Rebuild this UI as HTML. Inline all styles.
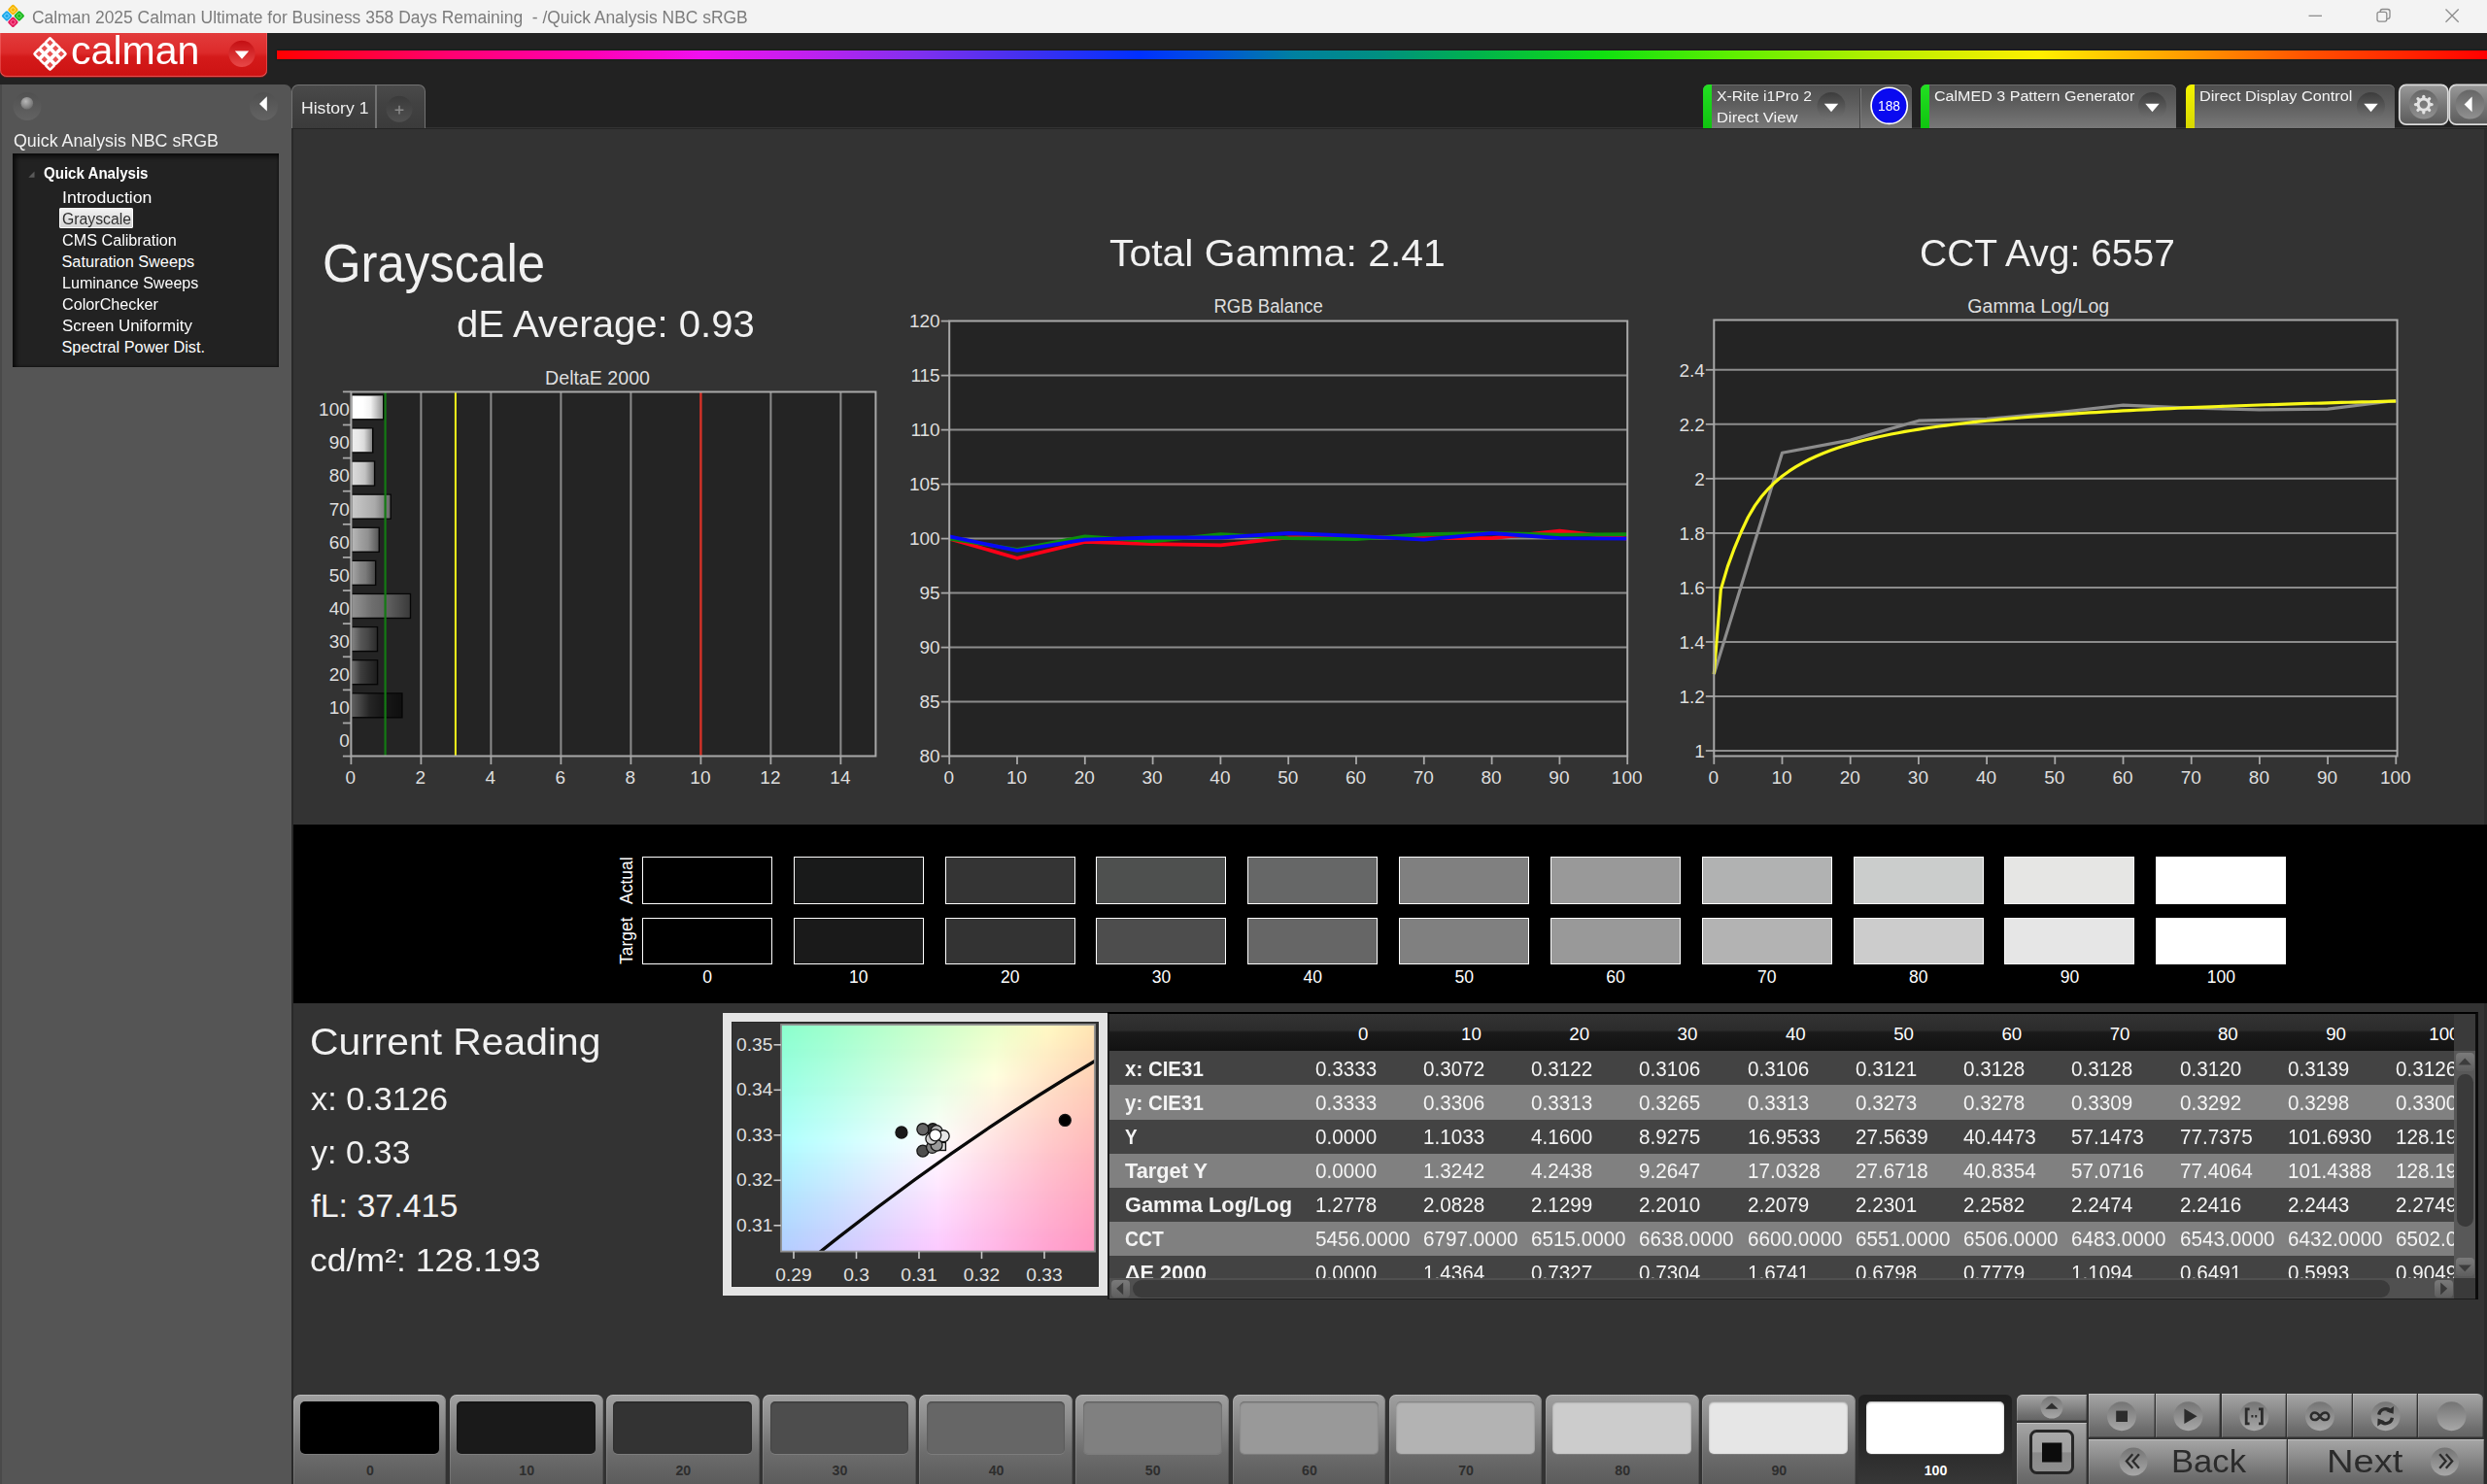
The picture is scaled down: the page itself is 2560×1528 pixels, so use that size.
<!DOCTYPE html>
<html lang="en"><head><meta charset="utf-8"><title>Calman 2025 - Quick Analysis NBC sRGB</title>
<style>
html,body{margin:0;padding:0;background:#333;}
body{width:2560px;height:1528px;overflow:hidden;font-family:"Liberation Sans",sans-serif;}
#app{position:relative;width:2560px;height:1528px;overflow:hidden;background:#333333;}
.b{position:absolute;box-sizing:border-box;}
.t{position:absolute;white-space:pre;line-height:1;transform-origin:0 0;font-family:"Liberation Sans",sans-serif;}
svg{position:absolute;left:0;top:0;overflow:visible;}
svg text{font-family:"Liberation Sans",sans-serif;}
</style></head><body><div id="app">
<div class="b" style="left:0px;top:0px;width:2560px;height:34px;background:#f3f3f3;"></div>
<svg width="34" height="34" viewBox="0 0 34 34">
<g transform="translate(13.4 16.4) rotate(45)">
<rect x="-8.6" y="-8.6" width="8.2" height="8.2" rx="1.6" fill="#f5b400"/>
<rect x="-8.6" y="0.4" width="8.2" height="8.2" rx="1.6" fill="#1aa7e8"/>
<rect x="0.4" y="-8.6" width="8.2" height="8.2" rx="1.6" fill="#19b41c"/>
<rect x="0.4" y="0.4" width="8.2" height="8.2" rx="1.6" fill="#e0185a"/>
<rect x="-6.5" y="-6.5" width="4" height="4" rx="0.8" fill="none" stroke="#ffd95a" stroke-width="1"/>
<rect x="-6.5" y="2.5" width="4" height="4" rx="0.8" fill="none" stroke="#6cd0ff" stroke-width="1"/>
<rect x="2.5" y="-6.5" width="4" height="4" rx="0.8" fill="none" stroke="#5fe060" stroke-width="1"/>
<rect x="2.5" y="2.5" width="4" height="4" rx="0.8" fill="none" stroke="#ff6a9a" stroke-width="1"/>
</g></svg>
<span class="t" style="left:33px;top:9.7px;font-size:17.6px;color:#7c7c7c;transform:scaleX(0.9914);">Calman 2025 Calman Ultimate for Business 358 Days Remaining  - /Quick Analysis NBC sRGB</span>
<svg width="2560" height="34" viewBox="0 0 2560 34" fill="none" stroke="#8c8c8c" stroke-width="1.3">
<path d="M2376.5 16.3H2390"/>
<rect x="2447" y="12.3" width="9.8" height="9.8" rx="2"/>
<path d="M2450.2 12.3v-0.6a2.2 2.2 0 0 1 2.2-2.2h5.4a2.2 2.2 0 0 1 2.2 2.2v5.4a2.2 2.2 0 0 1-2.2 2.2h-0.8"/>
<path d="M2517.5 9.5l13.2 13.2M2530.7 9.5l-13.2 13.2"/>
</svg>
<div class="b" style="left:0px;top:34px;width:2560px;height:97px;background:#222222;"></div>
<div class="b" style="left:285px;top:52px;width:2275px;height:9px;background:linear-gradient(90deg,#ff0000 0%,#ff0070 7.8%,#ff00b0 13.9%,#f010f0 19.3%,#c020f0 24%,#8030f0 29%,#4030f0 34%,#0030ff 39%,#0050e0 42%,#0080a0 46%,#009080 50%,#00b050 54%,#10e010 60%,#60f000 66%,#b0f000 72%,#fff000 79.7%,#ffa000 86%,#ff5000 92%,#ff0000 100%);box-shadow:0 0 2px rgba(0,0,0,.6);"></div>
<div class="b" style="left:0px;top:34px;width:274.5px;height:44.5px;background:linear-gradient(180deg,#e23c3c 0%,#dd2a2a 45%,#d41a1a 55%,#cc1212 100%);border-radius:0 0 7px 7px;box-shadow:0 1px 0 #7a1a1a, inset 0 -1px 0 rgba(255,150,150,.45), inset 1px 0 0 rgba(255,140,140,.35), inset -1px 0 0 rgba(255,140,140,.35);"></div>
<svg width="280" height="90" viewBox="0 0 280 90">
<g transform="translate(51.5 55.5) rotate(45)" fill="#e85252" stroke="#fff" stroke-width="2.5">
<rect x="-11.6" y="-11.6" width="7" height="7" rx="1"/><rect x="-3.5" y="-11.6" width="7" height="7" rx="1"/><rect x="4.6" y="-11.6" width="7" height="7" rx="1"/>
<rect x="-11.6" y="-3.5" width="7" height="7" rx="1"/><rect x="-3.5" y="-3.5" width="7" height="7" rx="1"/><rect x="4.6" y="-3.5" width="7" height="7" rx="1"/>
<rect x="-11.6" y="4.6" width="7" height="7" rx="1"/><rect x="-3.5" y="4.6" width="7" height="7" rx="1"/><rect x="4.6" y="4.6" width="7" height="7" rx="1"/>
</g>
<defs><linearGradient id="lgdd" x1="0" y1="0" x2="0" y2="1"><stop offset="0" stop-color="#c40e12"/><stop offset="1" stop-color="#e84848"/></linearGradient></defs>
<circle cx="249" cy="55.3" r="13.6" fill="url(#lgdd)"/>
<path d="M241.8 52.4h14.4l-7.2 8.4z" fill="#fff"/>
</svg>
<span class="t" style="left:72.6px;top:32.3px;font-size:40.4px;color:#ffffff;transform:scaleX(1.0174);">calman</span>
<div class="b" style="left:0px;top:87px;width:299.5px;height:1441px;background:#555555;border-radius:0 7px 0 0;border-left:2px solid #4a4a4a;"></div>
<svg width="300" height="140" viewBox="0 0 300 140">
<defs>
<linearGradient id="sbc" x1="0" y1="0" x2="0" y2="1"><stop offset="0" stop-color="#505050"/><stop offset="1" stop-color="#636363"/></linearGradient>
<radialGradient id="sph" cx="0.4" cy="0.35" r="0.7"><stop offset="0" stop-color="#b8b8b8"/><stop offset="1" stop-color="#6a6a6a"/></radialGradient>
</defs>
<circle cx="28" cy="109.5" r="14.5" fill="url(#sbc)"/>
<circle cx="27.8" cy="106.3" r="6.3" fill="url(#sph)"/>
<circle cx="271.5" cy="109.5" r="14.5" fill="url(#sbc)"/>
<path d="M274.8 99.2v15.4l-7.8-7.7z" fill="#fff"/>
</svg>
<span class="t" style="left:14.2px;top:136.6px;font-size:17.6px;color:#f2f2f2;transform:scaleX(1.0129);">Quick Analysis NBC sRGB</span>
<div class="b" style="left:13px;top:158px;width:273.5px;height:220px;background:#222222;box-shadow:inset 3px 3px 5px rgba(0,0,0,.75), inset -1px -1px 2px rgba(0,0,0,.4);"></div>
<svg width="80" height="200" viewBox="0 0 80 200"><path d="M35.5 176.6v6.2h-6.2z" fill="#5a5a5a"/></svg>
<span class="t" style="left:45px;top:171.26px;font-size:16px;color:#ffffff;font-weight:bold;transform:scaleX(0.9419);">Quick Analysis</span>
<div class="b" style="left:61.3px;top:213.5px;width:76px;height:21.5px;background:linear-gradient(180deg,#f2f2f2,#d4d4d4);border:1px solid #fafafa;border-radius:1px;"></div>
<span class="t" style="left:63.5px;top:195px;font-size:16.3px;color:#ffffff;transform:scaleX(1.0860);">Introduction</span>
<span class="t" style="left:63.5px;top:217.05px;font-size:16.3px;color:#2e2e2e;transform:scaleX(0.9676);">Grayscale</span>
<span class="t" style="left:63.5px;top:239.1px;font-size:16.3px;color:#ffffff;transform:scaleX(0.9944);">CMS Calibration</span>
<span class="t" style="left:63.5px;top:261.15px;font-size:16.3px;color:#ffffff;">Saturation Sweeps</span>
<span class="t" style="left:63.5px;top:283.2px;font-size:16.3px;color:#ffffff;transform:scaleX(0.9876);">Luminance Sweeps</span>
<span class="t" style="left:63.5px;top:305.25px;font-size:16.3px;color:#ffffff;transform:scaleX(0.9935);">ColorChecker</span>
<span class="t" style="left:63.5px;top:327.3px;font-size:16.3px;color:#ffffff;transform:scaleX(1.0345);">Screen Uniformity</span>
<span class="t" style="left:63.5px;top:349.35px;font-size:16.3px;color:#ffffff;">Spectral Power Dist.</span>
<div class="b" style="left:300px;top:86.6px;width:137.5px;height:45px;background:linear-gradient(180deg,#4a4a4a 0%,#424242 40%,#3b3b3b 100%);border:1.5px solid #727272;border-bottom:none;border-radius:7px 7px 0 0;"></div>
<div class="b" style="left:386.4px;top:88px;width:2px;height:43.5px;background:#727272;"></div>
<svg width="450" height="140" viewBox="0 0 450 140">
<defs><linearGradient id="plc" x1="0" y1="0" x2="0" y2="1"><stop offset="0" stop-color="#3a3a3a"/><stop offset="1" stop-color="#505050"/></linearGradient></defs>
<circle cx="411" cy="112.3" r="13.5" fill="url(#plc)"/>
<path d="M406.6 113.2h8.8M411 108.8v8.8" stroke="#8a8a8a" stroke-width="1.5" fill="none"/>
</svg>
<span class="t" style="left:309.6px;top:102.96px;font-size:17.3px;color:#f0f0f0;transform:scaleX(1.0183);">History 1</span>
<div class="b" style="left:1753px;top:87px;width:215px;height:44.5px;background:linear-gradient(180deg,#4e4e4e 0%,#5e5e5e 45%,#787878 100%);border-radius:6px 6px 0 0;overflow:hidden;box-shadow:inset 0 1px 0 #6c6c6c;"><div class="b" style="left:0;top:0;width:9px;height:45px;background:linear-gradient(180deg,#22e022,#10c410);"></div></div>
<div class="b" style="left:1976.5px;top:87px;width:263.5px;height:44.5px;background:linear-gradient(180deg,#4e4e4e 0%,#5e5e5e 45%,#787878 100%);border-radius:6px 6px 0 0;overflow:hidden;box-shadow:inset 0 1px 0 #6c6c6c;"><div class="b" style="left:0;top:0;width:9px;height:45px;background:linear-gradient(180deg,#22e022,#10c410);"></div></div>
<div class="b" style="left:2250px;top:87px;width:214.5px;height:44.5px;background:linear-gradient(180deg,#4e4e4e 0%,#5e5e5e 45%,#787878 100%);border-radius:6px 6px 0 0;overflow:hidden;box-shadow:inset 0 1px 0 #6c6c6c;"><div class="b" style="left:0;top:0;width:9px;height:45px;background:linear-gradient(180deg,#f4f400,#d8d800);"></div></div>
<div class="b" style="left:1913.6px;top:91px;width:1.6px;height:40.5px;background:#454545;box-shadow:1px 0 0 #7a7a7a;"></div>
<svg width="2560" height="140" viewBox="0 0 2560 140">
<defs><linearGradient id="ddc" x1="0" y1="0" x2="0" y2="1"><stop offset="0" stop-color="#3c3c3c"/><stop offset="1" stop-color="#727272"/></linearGradient>
<linearGradient id="gbt" x1="0" y1="0" x2="0" y2="1"><stop offset="0" stop-color="#9a9a9a"/><stop offset="0.5" stop-color="#787878"/><stop offset="1" stop-color="#5a5a5a"/></linearGradient>
<linearGradient id="gci" x1="0" y1="0" x2="0" y2="1"><stop offset="0" stop-color="#666666"/><stop offset="1" stop-color="#909090"/></linearGradient></defs>
<circle cx="1885" cy="109.5" r="14.5" fill="url(#ddc)"/><path d="M1877.8 106.8h14.4l-7.2 8.4z" fill="#fff"/>
<circle cx="2215.5" cy="109.5" r="14.5" fill="url(#ddc)"/><path d="M2208.3 106.8h14.4l-7.2 8.4z" fill="#fff"/>
<circle cx="2440.5" cy="109.5" r="14.5" fill="url(#ddc)"/><path d="M2433.3 106.8h14.4l-7.2 8.4z" fill="#fff"/>
<circle cx="1944.7" cy="108.8" r="18.6" fill="#0a0af0" stroke="#fff" stroke-width="1.6"/>
<rect x="2469.8" y="87.4" width="50" height="40.8" rx="7" fill="url(#gbt)" stroke="#dadada" stroke-width="1.7"/>
<rect x="2521.3" y="87.4" width="50" height="40.8" rx="7" fill="url(#gbt)" stroke="#dadada" stroke-width="1.7"/>
<circle cx="2494.8" cy="107.6" r="15" fill="url(#gci)"/>
<circle cx="2542.5" cy="107.6" r="15" fill="url(#gci)"/>
<path d="M2544.6 99.6v15.6l-8-7.8z" fill="#fff"/>
<g transform="translate(2494.8 107.6)" fill="none" stroke="#e2e2e2">
<circle r="5.7" stroke-width="3"/>
<g stroke-width="3.2" stroke-linecap="round"><path d="M0 -7.2V-8.3"/><path d="M0 -7.2V-8.3" transform="rotate(45)"/><path d="M0 -7.2V-8.3" transform="rotate(90)"/><path d="M0 -7.2V-8.3" transform="rotate(135)"/><path d="M0 -7.2V-8.3" transform="rotate(180)"/><path d="M0 -7.2V-8.3" transform="rotate(225)"/><path d="M0 -7.2V-8.3" transform="rotate(270)"/><path d="M0 -7.2V-8.3" transform="rotate(315)"/></g>
</g>
</svg>
<span class="t" style="left:1767px;top:91.59px;font-size:14.9px;color:#f4f4f4;transform:scaleX(1.0566);">X-Rite i1Pro 2</span>
<span class="t" style="left:1767px;top:113.69px;font-size:14.9px;color:#f4f4f4;transform:scaleX(1.1122);">Direct View</span>
<span class="t" style="left:1933.4px;top:101.36px;font-size:15.4px;color:#ffffff;transform:scaleX(0.8951);">188</span>
<span class="t" style="left:1990.5px;top:91.59px;font-size:14.9px;color:#f4f4f4;transform:scaleX(1.0795);">CalMED 3 Pattern Generator</span>
<span class="t" style="left:2263.5px;top:91.59px;font-size:14.9px;color:#f4f4f4;transform:scaleX(1.0932);">Direct Display Control</span>
<div class="b" style="left:300px;top:131.5px;width:2260px;height:1397px;background:#333333;border-left:2px solid #292929;border-top:1.6px solid #242424;"></div>
<div class="b" style="left:2556.5px;top:133px;width:3.5px;height:1395px;background:rgba(0,0,0,.16);"></div>
<span class="t" style="left:331.5px;top:244.98px;font-size:54.6px;color:#f1f1f1;transform:scaleX(0.9317);">Grayscale</span>
<span class="t" style="left:469.8px;top:315.33px;font-size:38.6px;color:#f1f1f1;transform:scaleX(1.0391);">dE Average: 0.93</span>
<span class="t" style="left:1141.8px;top:241.63px;font-size:38.6px;color:#f1f1f1;transform:scaleX(1.0610);">Total Gamma: 2.41</span>
<span class="t" style="left:1975.6px;top:242.13px;font-size:38.6px;color:#f1f1f1;transform:scaleX(1.0101);">CCT Avg: 6557</span>
<svg width="2560" height="1528" viewBox="0 0 2560 1528">
<defs>
<linearGradient id="gloss" x1="0" y1="0" x2="1" y2="0"><stop offset="0" stop-color="#fff" stop-opacity="0.30"/><stop offset="0.35" stop-color="#fff" stop-opacity="0.05"/><stop offset="0.6" stop-color="#000" stop-opacity="0.05"/><stop offset="1" stop-color="#000" stop-opacity="0.42"/></linearGradient>
</defs>
<g id="deltae">
<rect x="361.4" y="403.4" width="540" height="375.2" fill="#242424"/>
<path d="M433.4 403.4V778.6" stroke="#8c8c8c" stroke-width="2"/>
<path d="M505.4 403.4V778.6" stroke="#8c8c8c" stroke-width="2"/>
<path d="M577.4 403.4V778.6" stroke="#8c8c8c" stroke-width="2"/>
<path d="M649.4 403.4V778.6" stroke="#8c8c8c" stroke-width="2"/>
<path d="M793.4 403.4V778.6" stroke="#8c8c8c" stroke-width="2"/>
<path d="M865.4 403.4V778.6" stroke="#8c8c8c" stroke-width="2"/>
<rect x="362.4" y="713.18" width="52.21" height="26.3" fill="#060606"/>
<rect x="362.4" y="714.48" width="50.71" height="23.6" fill="#1a1a1a"/>
<rect x="362.4" y="714.48" width="50.71" height="23.6" fill="url(#gloss)"/>
<rect x="362.4" y="679.07" width="26.88" height="26.3" fill="#060606"/>
<rect x="362.4" y="680.37" width="25.38" height="23.6" fill="#333333"/>
<rect x="362.4" y="680.37" width="25.38" height="23.6" fill="url(#gloss)"/>
<rect x="362.4" y="644.96" width="26.79" height="26.3" fill="#060606"/>
<rect x="362.4" y="646.26" width="25.29" height="23.6" fill="#4d4d4d"/>
<rect x="362.4" y="646.26" width="25.29" height="23.6" fill="url(#gloss)"/>
<rect x="362.4" y="610.85" width="60.77" height="26.3" fill="#060606"/>
<rect x="362.4" y="612.15" width="59.27" height="23.6" fill="#666666"/>
<rect x="362.4" y="612.15" width="59.27" height="23.6" fill="url(#gloss)"/>
<rect x="362.4" y="576.75" width="24.97" height="26.3" fill="#060606"/>
<rect x="362.4" y="578.05" width="23.47" height="23.6" fill="#808080"/>
<rect x="362.4" y="578.05" width="23.47" height="23.6" fill="url(#gloss)"/>
<rect x="362.4" y="542.64" width="28.5" height="26.3" fill="#060606"/>
<rect x="362.4" y="543.94" width="27" height="23.6" fill="#999999"/>
<rect x="362.4" y="543.94" width="27" height="23.6" fill="url(#gloss)"/>
<rect x="362.4" y="508.53" width="40.44" height="26.3" fill="#060606"/>
<rect x="362.4" y="509.83" width="38.94" height="23.6" fill="#b3b3b3"/>
<rect x="362.4" y="509.83" width="38.94" height="23.6" fill="url(#gloss)"/>
<rect x="362.4" y="474.42" width="23.87" height="26.3" fill="#060606"/>
<rect x="362.4" y="475.72" width="22.37" height="23.6" fill="#cccccc"/>
<rect x="362.4" y="475.72" width="22.37" height="23.6" fill="url(#gloss)"/>
<rect x="362.4" y="440.31" width="22.07" height="26.3" fill="#060606"/>
<rect x="362.4" y="441.61" width="20.57" height="23.6" fill="#e6e6e6"/>
<rect x="362.4" y="441.61" width="20.57" height="23.6" fill="url(#gloss)"/>
<rect x="362.4" y="406.2" width="33.08" height="26.3" fill="#060606"/>
<rect x="362.4" y="407.5" width="31.58" height="23.6" fill="#ffffff"/>
<rect x="362.4" y="407.5" width="31.58" height="23.6" fill="url(#gloss)"/>
<path d="M396.6 403.4V778.6" stroke="#137a13" stroke-width="2.2"/>
<path d="M468.9 403.4V778.6" stroke="#f4f41a" stroke-width="2"/>
<path d="M721.4 403.4V778.6" stroke="#d63228" stroke-width="2.4"/>
<path d="M361.4 403.4H901.4V778.6H361.4Z" fill="none" stroke="#a8a8a8" stroke-width="2"/>
<path d="M352.9 778.6H361.4" stroke="#a8a8a8" stroke-width="1.8"/>
<path d="M352.9 744.49H361.4" stroke="#a8a8a8" stroke-width="1.8"/>
<path d="M352.9 710.38H361.4" stroke="#a8a8a8" stroke-width="1.8"/>
<path d="M352.9 676.27H361.4" stroke="#a8a8a8" stroke-width="1.8"/>
<path d="M352.9 642.16H361.4" stroke="#a8a8a8" stroke-width="1.8"/>
<path d="M352.9 608.05H361.4" stroke="#a8a8a8" stroke-width="1.8"/>
<path d="M352.9 573.95H361.4" stroke="#a8a8a8" stroke-width="1.8"/>
<path d="M352.9 539.84H361.4" stroke="#a8a8a8" stroke-width="1.8"/>
<path d="M352.9 505.73H361.4" stroke="#a8a8a8" stroke-width="1.8"/>
<path d="M352.9 471.62H361.4" stroke="#a8a8a8" stroke-width="1.8"/>
<path d="M352.9 437.51H361.4" stroke="#a8a8a8" stroke-width="1.8"/>
<path d="M352.9 403.4H361.4" stroke="#a8a8a8" stroke-width="1.8"/>
<text x="359.8" y="769.35" font-size="19" text-anchor="end" fill="#dedede">0</text>
<text x="359.8" y="735.24" font-size="19" text-anchor="end" fill="#dedede">10</text>
<text x="359.8" y="701.13" font-size="19" text-anchor="end" fill="#dedede">20</text>
<text x="359.8" y="667.02" font-size="19" text-anchor="end" fill="#dedede">30</text>
<text x="359.8" y="632.91" font-size="19" text-anchor="end" fill="#dedede">40</text>
<text x="359.8" y="598.8" font-size="19" text-anchor="end" fill="#dedede">50</text>
<text x="359.8" y="564.69" font-size="19" text-anchor="end" fill="#dedede">60</text>
<text x="359.8" y="530.58" font-size="19" text-anchor="end" fill="#dedede">70</text>
<text x="359.8" y="496.47" font-size="19" text-anchor="end" fill="#dedede">80</text>
<text x="359.8" y="462.36" font-size="19" text-anchor="end" fill="#dedede">90</text>
<text x="359.8" y="428.25" font-size="19" text-anchor="end" fill="#dedede">100</text>
<path d="M361.4 778.6V787.1" stroke="#a8a8a8" stroke-width="1.8"/>
<text x="360.9" y="807.2" font-size="19" text-anchor="middle" fill="#dedede">0</text>
<path d="M433.4 778.6V787.1" stroke="#a8a8a8" stroke-width="1.8"/>
<text x="432.9" y="807.2" font-size="19" text-anchor="middle" fill="#dedede">2</text>
<path d="M505.4 778.6V787.1" stroke="#a8a8a8" stroke-width="1.8"/>
<text x="504.9" y="807.2" font-size="19" text-anchor="middle" fill="#dedede">4</text>
<path d="M577.4 778.6V787.1" stroke="#a8a8a8" stroke-width="1.8"/>
<text x="576.9" y="807.2" font-size="19" text-anchor="middle" fill="#dedede">6</text>
<path d="M649.4 778.6V787.1" stroke="#a8a8a8" stroke-width="1.8"/>
<text x="648.9" y="807.2" font-size="19" text-anchor="middle" fill="#dedede">8</text>
<path d="M721.4 778.6V787.1" stroke="#a8a8a8" stroke-width="1.8"/>
<text x="720.9" y="807.2" font-size="19" text-anchor="middle" fill="#dedede">10</text>
<path d="M793.4 778.6V787.1" stroke="#a8a8a8" stroke-width="1.8"/>
<text x="792.9" y="807.2" font-size="19" text-anchor="middle" fill="#dedede">12</text>
<path d="M865.4 778.6V787.1" stroke="#a8a8a8" stroke-width="1.8"/>
<text x="864.9" y="807.2" font-size="19" text-anchor="middle" fill="#dedede">14</text>
<text x="615" y="395.9" font-size="19.6" text-anchor="middle" fill="#dedede">DeltaE 2000</text>
</g>
<g id="rgbbalance">
<rect x="977.2" y="330.6" width="698" height="448" fill="#242424"/>
<path d="M977.2 722.6H1675.2" stroke="#8c8c8c" stroke-width="2"/>
<path d="M977.2 666.6H1675.2" stroke="#8c8c8c" stroke-width="2"/>
<path d="M977.2 610.6H1675.2" stroke="#8c8c8c" stroke-width="2"/>
<path d="M977.2 554.6H1675.2" stroke="#8c8c8c" stroke-width="2"/>
<path d="M977.2 498.6H1675.2" stroke="#8c8c8c" stroke-width="2"/>
<path d="M977.2 442.6H1675.2" stroke="#8c8c8c" stroke-width="2"/>
<path d="M977.2 386.6H1675.2" stroke="#8c8c8c" stroke-width="2"/>
<polyline points="977.2,554.6 1047,574.76 1116.8,557.96 1186.6,560.2 1256.4,561.32 1326.2,553.48 1396,552.36 1465.8,554.04 1535.6,554.04 1605.4,546.76 1675.2,554.6" fill="none" stroke="#ff0018" stroke-width="3.8" stroke-linejoin="round"/>
<polyline points="977.2,554.6 1047,565.8 1116.8,552.36 1186.6,557.4 1256.4,550.12 1326.2,554.04 1396,555.16 1465.8,550.12 1535.6,549 1605.4,550.68 1675.2,550.12" fill="none" stroke="#0c8c0c" stroke-width="3.8" stroke-linejoin="round"/>
<polyline points="977.2,552.36 1047,566.92 1116.8,555.72 1186.6,553.48 1256.4,553.48 1326.2,549 1396,551.8 1465.8,555.72 1535.6,549 1605.4,554.04 1675.2,554.6" fill="none" stroke="#0808f4" stroke-width="3.8" stroke-linejoin="round"/>
<path d="M977.2 330.6H1675.2V778.6H977.2Z" fill="none" stroke="#a8a8a8" stroke-width="2"/>
<path d="M968.7 778.6H977.2" stroke="#a8a8a8" stroke-width="1.8"/>
<text x="967.7" y="785.4" font-size="19" text-anchor="end" fill="#dedede">80</text>
<path d="M968.7 722.6H977.2" stroke="#a8a8a8" stroke-width="1.8"/>
<text x="967.7" y="729.4" font-size="19" text-anchor="end" fill="#dedede">85</text>
<path d="M968.7 666.6H977.2" stroke="#a8a8a8" stroke-width="1.8"/>
<text x="967.7" y="673.4" font-size="19" text-anchor="end" fill="#dedede">90</text>
<path d="M968.7 610.6H977.2" stroke="#a8a8a8" stroke-width="1.8"/>
<text x="967.7" y="617.4" font-size="19" text-anchor="end" fill="#dedede">95</text>
<path d="M968.7 554.6H977.2" stroke="#a8a8a8" stroke-width="1.8"/>
<text x="967.7" y="561.4" font-size="19" text-anchor="end" fill="#dedede">100</text>
<path d="M968.7 498.6H977.2" stroke="#a8a8a8" stroke-width="1.8"/>
<text x="967.7" y="505.4" font-size="19" text-anchor="end" fill="#dedede">105</text>
<path d="M968.7 442.6H977.2" stroke="#a8a8a8" stroke-width="1.8"/>
<text x="967.7" y="449.4" font-size="19" text-anchor="end" fill="#dedede">110</text>
<path d="M968.7 386.6H977.2" stroke="#a8a8a8" stroke-width="1.8"/>
<text x="967.7" y="393.4" font-size="19" text-anchor="end" fill="#dedede">115</text>
<path d="M968.7 330.6H977.2" stroke="#a8a8a8" stroke-width="1.8"/>
<text x="967.7" y="337.4" font-size="19" text-anchor="end" fill="#dedede">120</text>
<path d="M977.2 778.6V787.1" stroke="#a8a8a8" stroke-width="1.8"/>
<text x="976.7" y="807.4" font-size="19" text-anchor="middle" fill="#dedede">0</text>
<path d="M1047 778.6V787.1" stroke="#a8a8a8" stroke-width="1.8"/>
<text x="1046.5" y="807.4" font-size="19" text-anchor="middle" fill="#dedede">10</text>
<path d="M1116.8 778.6V787.1" stroke="#a8a8a8" stroke-width="1.8"/>
<text x="1116.3" y="807.4" font-size="19" text-anchor="middle" fill="#dedede">20</text>
<path d="M1186.6 778.6V787.1" stroke="#a8a8a8" stroke-width="1.8"/>
<text x="1186.1" y="807.4" font-size="19" text-anchor="middle" fill="#dedede">30</text>
<path d="M1256.4 778.6V787.1" stroke="#a8a8a8" stroke-width="1.8"/>
<text x="1255.9" y="807.4" font-size="19" text-anchor="middle" fill="#dedede">40</text>
<path d="M1326.2 778.6V787.1" stroke="#a8a8a8" stroke-width="1.8"/>
<text x="1325.7" y="807.4" font-size="19" text-anchor="middle" fill="#dedede">50</text>
<path d="M1396 778.6V787.1" stroke="#a8a8a8" stroke-width="1.8"/>
<text x="1395.5" y="807.4" font-size="19" text-anchor="middle" fill="#dedede">60</text>
<path d="M1465.8 778.6V787.1" stroke="#a8a8a8" stroke-width="1.8"/>
<text x="1465.3" y="807.4" font-size="19" text-anchor="middle" fill="#dedede">70</text>
<path d="M1535.6 778.6V787.1" stroke="#a8a8a8" stroke-width="1.8"/>
<text x="1535.1" y="807.4" font-size="19" text-anchor="middle" fill="#dedede">80</text>
<path d="M1605.4 778.6V787.1" stroke="#a8a8a8" stroke-width="1.8"/>
<text x="1604.9" y="807.4" font-size="19" text-anchor="middle" fill="#dedede">90</text>
<path d="M1675.2 778.6V787.1" stroke="#a8a8a8" stroke-width="1.8"/>
<text x="1674.7" y="807.4" font-size="19" text-anchor="middle" fill="#dedede">100</text>
<text x="1305.7" y="321.8" font-size="19.6" text-anchor="middle" fill="#dedede" textLength="112.5" lengthAdjust="spacingAndGlyphs">RGB Balance</text>
</g>
<g id="gammaloglog">
<rect x="1764.3" y="329.4" width="703.3" height="449" fill="#242424"/>
<path d="M1764.3 773H2467.6" stroke="#8c8c8c" stroke-width="2"/>
<path d="M1764.3 716.97H2467.6" stroke="#8c8c8c" stroke-width="2"/>
<path d="M1764.3 660.94H2467.6" stroke="#8c8c8c" stroke-width="2"/>
<path d="M1764.3 604.91H2467.6" stroke="#8c8c8c" stroke-width="2"/>
<path d="M1764.3 548.88H2467.6" stroke="#8c8c8c" stroke-width="2"/>
<path d="M1764.3 492.85H2467.6" stroke="#8c8c8c" stroke-width="2"/>
<path d="M1764.3 436.82H2467.6" stroke="#8c8c8c" stroke-width="2"/>
<path d="M1764.3 380.79H2467.6" stroke="#8c8c8c" stroke-width="2"/>
<polyline points="1764.3,694.05 1834.5,466.29 1904.7,453.1 1974.9,433.18 2045.1,431.25 2115.3,425.03 2185.5,417.15 2255.7,420.18 2325.9,421.8 2396.1,421.05 2466.3,412.47" fill="none" stroke="#8c8c8c" stroke-width="3.2" stroke-linejoin="round"/>
<polyline points="1764.3,694.05 1771.32,607.15 1778.34,583.34 1785.36,564.29 1792.38,547.5 1799.4,532.49 1806.42,520.67 1813.44,511.05 1820.46,503.03 1827.48,496.21 1834.5,490.33 1841.52,485.19 1848.54,480.65 1855.56,476.62 1862.58,472.99 1869.6,469.72 1876.62,466.75 1883.64,464.03 1890.66,461.54 1897.68,459.24 1904.7,457.11 1911.72,455.14 1918.74,453.3 1925.76,451.58 1932.78,449.98 1939.8,448.46 1946.82,447.04 1953.84,445.7 1960.86,444.43 1967.88,443.23 1974.9,442.1 1981.92,441.01 1988.94,439.99 1995.96,439 2002.98,438.07 2010,437.17 2017.02,436.32 2024.04,435.5 2031.06,434.71 2038.08,433.96 2045.1,433.24 2052.12,432.54 2059.14,431.87 2066.16,431.22 2073.18,430.6 2080.2,430 2087.22,429.42 2094.24,428.86 2101.26,428.32 2108.28,427.79 2115.3,427.28 2122.32,426.79 2129.34,426.31 2136.36,425.85 2143.38,425.4 2150.4,424.96 2157.42,424.54 2164.44,424.13 2171.46,423.73 2178.48,423.34 2185.5,422.96 2192.52,422.59 2199.54,422.23 2206.56,421.88 2213.58,421.53 2220.6,421.2 2227.62,420.87 2234.64,420.55 2241.66,420.24 2248.68,419.94 2255.7,419.64 2262.72,419.35 2269.74,419.07 2276.76,418.79 2283.78,418.52 2290.8,418.25 2297.82,417.99 2304.84,417.74 2311.86,417.49 2318.88,417.24 2325.9,417.01 2332.92,416.77 2339.94,416.54 2346.96,416.31 2353.98,416.09 2361,415.88 2368.02,415.66 2375.04,415.45 2382.06,415.25 2389.08,415.05 2396.1,414.85 2403.12,414.65 2410.14,414.46 2417.16,414.27 2424.18,414.09 2431.2,413.91 2438.22,413.73 2445.24,413.55 2452.26,413.38 2459.28,413.21 2466.3,413.04" fill="none" stroke="#f8f818" stroke-width="3.2" stroke-linejoin="round"/>
<path d="M1764.3 329.4H2467.6V778.4H1764.3Z" fill="none" stroke="#a8a8a8" stroke-width="2"/>
<path d="M1755.8 773H1764.3" stroke="#a8a8a8" stroke-width="1.8"/>
<text x="1754.8" y="779.8" font-size="19" text-anchor="end" fill="#dedede">1</text>
<path d="M1755.8 716.97H1764.3" stroke="#a8a8a8" stroke-width="1.8"/>
<text x="1754.8" y="723.77" font-size="19" text-anchor="end" fill="#dedede">1.2</text>
<path d="M1755.8 660.94H1764.3" stroke="#a8a8a8" stroke-width="1.8"/>
<text x="1754.8" y="667.74" font-size="19" text-anchor="end" fill="#dedede">1.4</text>
<path d="M1755.8 604.91H1764.3" stroke="#a8a8a8" stroke-width="1.8"/>
<text x="1754.8" y="611.71" font-size="19" text-anchor="end" fill="#dedede">1.6</text>
<path d="M1755.8 548.88H1764.3" stroke="#a8a8a8" stroke-width="1.8"/>
<text x="1754.8" y="555.68" font-size="19" text-anchor="end" fill="#dedede">1.8</text>
<path d="M1755.8 492.85H1764.3" stroke="#a8a8a8" stroke-width="1.8"/>
<text x="1754.8" y="499.65" font-size="19" text-anchor="end" fill="#dedede">2</text>
<path d="M1755.8 436.82H1764.3" stroke="#a8a8a8" stroke-width="1.8"/>
<text x="1754.8" y="443.62" font-size="19" text-anchor="end" fill="#dedede">2.2</text>
<path d="M1755.8 380.79H1764.3" stroke="#a8a8a8" stroke-width="1.8"/>
<text x="1754.8" y="387.59" font-size="19" text-anchor="end" fill="#dedede">2.4</text>
<path d="M1764.3 778.4V786.9" stroke="#a8a8a8" stroke-width="1.8"/>
<text x="1763.8" y="807.4" font-size="19" text-anchor="middle" fill="#dedede">0</text>
<path d="M1834.5 778.4V786.9" stroke="#a8a8a8" stroke-width="1.8"/>
<text x="1834" y="807.4" font-size="19" text-anchor="middle" fill="#dedede">10</text>
<path d="M1904.7 778.4V786.9" stroke="#a8a8a8" stroke-width="1.8"/>
<text x="1904.2" y="807.4" font-size="19" text-anchor="middle" fill="#dedede">20</text>
<path d="M1974.9 778.4V786.9" stroke="#a8a8a8" stroke-width="1.8"/>
<text x="1974.4" y="807.4" font-size="19" text-anchor="middle" fill="#dedede">30</text>
<path d="M2045.1 778.4V786.9" stroke="#a8a8a8" stroke-width="1.8"/>
<text x="2044.6" y="807.4" font-size="19" text-anchor="middle" fill="#dedede">40</text>
<path d="M2115.3 778.4V786.9" stroke="#a8a8a8" stroke-width="1.8"/>
<text x="2114.8" y="807.4" font-size="19" text-anchor="middle" fill="#dedede">50</text>
<path d="M2185.5 778.4V786.9" stroke="#a8a8a8" stroke-width="1.8"/>
<text x="2185" y="807.4" font-size="19" text-anchor="middle" fill="#dedede">60</text>
<path d="M2255.7 778.4V786.9" stroke="#a8a8a8" stroke-width="1.8"/>
<text x="2255.2" y="807.4" font-size="19" text-anchor="middle" fill="#dedede">70</text>
<path d="M2325.9 778.4V786.9" stroke="#a8a8a8" stroke-width="1.8"/>
<text x="2325.4" y="807.4" font-size="19" text-anchor="middle" fill="#dedede">80</text>
<path d="M2396.1 778.4V786.9" stroke="#a8a8a8" stroke-width="1.8"/>
<text x="2395.6" y="807.4" font-size="19" text-anchor="middle" fill="#dedede">90</text>
<path d="M2466.3 778.4V786.9" stroke="#a8a8a8" stroke-width="1.8"/>
<text x="2465.8" y="807.4" font-size="19" text-anchor="middle" fill="#dedede">100</text>
<text x="2098.3" y="321.5" font-size="19.6" text-anchor="middle" fill="#dedede">Gamma Log/Log</text>
</g>
</svg>
<div class="b" style="left:301.5px;top:848.5px;width:2258.5px;height:184.7px;background:#000000;"></div>
<div class="b" style="left:661px;top:882px;width:134px;height:49.2px;background:#000000;border:1.6px solid #ffffff;"></div>
<div class="b" style="left:661px;top:944.6px;width:134px;height:48.8px;background:#000000;border:1.6px solid #ffffff;"></div>
<span class="t" style="left:723.13px;top:997.79px;font-size:17.5px;color:#ffffff;">0</span>
<div class="b" style="left:816.83px;top:882px;width:134px;height:49.2px;background:#191a1a;border:1.6px solid #ffffff;"></div>
<div class="b" style="left:816.83px;top:944.6px;width:134px;height:48.8px;background:#1a1a1a;border:1.6px solid #ffffff;"></div>
<span class="t" style="left:874.1px;top:997.79px;font-size:17.5px;color:#ffffff;">10</span>
<div class="b" style="left:972.66px;top:882px;width:134px;height:49.2px;background:#343434;border:1.6px solid #ffffff;"></div>
<div class="b" style="left:972.66px;top:944.6px;width:134px;height:48.8px;background:#333333;border:1.6px solid #ffffff;"></div>
<span class="t" style="left:1029.93px;top:997.79px;font-size:17.5px;color:#ffffff;">20</span>
<div class="b" style="left:1128.49px;top:882px;width:134px;height:49.2px;background:#4e504f;border:1.6px solid #ffffff;"></div>
<div class="b" style="left:1128.49px;top:944.6px;width:134px;height:48.8px;background:#4d4d4d;border:1.6px solid #ffffff;"></div>
<span class="t" style="left:1185.76px;top:997.79px;font-size:17.5px;color:#ffffff;">30</span>
<div class="b" style="left:1284.32px;top:882px;width:134px;height:49.2px;background:#666767;border:1.6px solid #ffffff;"></div>
<div class="b" style="left:1284.32px;top:944.6px;width:134px;height:48.8px;background:#666666;border:1.6px solid #ffffff;"></div>
<span class="t" style="left:1341.59px;top:997.79px;font-size:17.5px;color:#ffffff;">40</span>
<div class="b" style="left:1440.15px;top:882px;width:134px;height:49.2px;background:#808080;border:1.6px solid #ffffff;"></div>
<div class="b" style="left:1440.15px;top:944.6px;width:134px;height:48.8px;background:#808080;border:1.6px solid #ffffff;"></div>
<span class="t" style="left:1497.42px;top:997.79px;font-size:17.5px;color:#ffffff;">50</span>
<div class="b" style="left:1595.98px;top:882px;width:134px;height:49.2px;background:#999999;border:1.6px solid #ffffff;"></div>
<div class="b" style="left:1595.98px;top:944.6px;width:134px;height:48.8px;background:#999999;border:1.6px solid #ffffff;"></div>
<span class="t" style="left:1653.25px;top:997.79px;font-size:17.5px;color:#ffffff;">60</span>
<div class="b" style="left:1751.81px;top:882px;width:134px;height:49.2px;background:#b1b2b2;border:1.6px solid #ffffff;"></div>
<div class="b" style="left:1751.81px;top:944.6px;width:134px;height:48.8px;background:#b3b3b3;border:1.6px solid #ffffff;"></div>
<span class="t" style="left:1809.08px;top:997.79px;font-size:17.5px;color:#ffffff;">70</span>
<div class="b" style="left:1907.64px;top:882px;width:134px;height:49.2px;background:#cbcdcc;border:1.6px solid #ffffff;"></div>
<div class="b" style="left:1907.64px;top:944.6px;width:134px;height:48.8px;background:#cccccc;border:1.6px solid #ffffff;"></div>
<span class="t" style="left:1964.91px;top:997.79px;font-size:17.5px;color:#ffffff;">80</span>
<div class="b" style="left:2063.47px;top:882px;width:134px;height:49.2px;background:#e6e6e4;border:1.6px solid #ffffff;"></div>
<div class="b" style="left:2063.47px;top:944.6px;width:134px;height:48.8px;background:#e6e6e6;border:1.6px solid #ffffff;"></div>
<span class="t" style="left:2120.74px;top:997.79px;font-size:17.5px;color:#ffffff;">90</span>
<div class="b" style="left:2219.3px;top:882px;width:134px;height:49.2px;background:#ffffff;border:1.6px solid #ffffff;"></div>
<div class="b" style="left:2219.3px;top:944.6px;width:134px;height:48.8px;background:#ffffff;border:1.6px solid #ffffff;"></div>
<span class="t" style="left:2271.7px;top:997.79px;font-size:17.5px;color:#ffffff;">100</span>
<span class="t" style="left:637px;top:930.5px;font-size:17.5px;color:#fff;transform:rotate(-90deg);transform-origin:0 0;">Actual</span>
<span class="t" style="left:637px;top:992.5px;font-size:17.5px;color:#fff;transform:rotate(-90deg);transform-origin:0 0;">Target</span>
<span class="t" style="left:319px;top:1054.03px;font-size:38.6px;color:#f1f1f1;transform:scaleX(1.0575);">Current Reading</span>
<span class="t" style="left:320.2px;top:1114.02px;font-size:34px;color:#f1f1f1;transform:scaleX(1.0080);">x: 0.3126</span>
<span class="t" style="left:320.2px;top:1168.92px;font-size:34px;color:#f1f1f1;transform:scaleX(1.0042);">y: 0.33</span>
<span class="t" style="left:320.2px;top:1224.22px;font-size:34px;color:#f1f1f1;">fL: 37.415</span>
<span class="t" style="left:319.2px;top:1279.62px;font-size:34px;color:#f1f1f1;transform:scaleX(1.0472);">cd/m²: 128.193</span>
<div class="b" style="left:743.6px;top:1042.8px;width:396.8px;height:290.8px;background:#333333;border:9px solid #e4e4e4;box-shadow:inset 0 0 0 1px #2a2a2a;"></div>
<svg width="2560" height="1528" viewBox="0 0 2560 1528"><defs>
<linearGradient id="cg0" x1="0" y1="0" x2="1" y2="0"><stop offset="0" stop-color="#87ffce"/><stop offset="0.17" stop-color="#9effcd"/><stop offset="0.33" stop-color="#b6ffcc"/><stop offset="0.5" stop-color="#d0ffcb"/><stop offset="0.67" stop-color="#eaffca"/><stop offset="0.83" stop-color="#fff8c3"/><stop offset="1" stop-color="#ffdfaf"/></linearGradient>
<linearGradient id="cg1" x1="0" y1="0" x2="1" y2="0"><stop offset="0" stop-color="#8affd2"/><stop offset="0.17" stop-color="#a1ffd1"/><stop offset="0.33" stop-color="#baffd0"/><stop offset="0.5" stop-color="#d4ffcf"/><stop offset="0.67" stop-color="#efffce"/><stop offset="0.83" stop-color="#fff4c4"/><stop offset="1" stop-color="#ffdbaf"/></linearGradient>
<linearGradient id="cg2" x1="0" y1="0" x2="1" y2="0"><stop offset="0" stop-color="#8cffd6"/><stop offset="0.17" stop-color="#a4ffd5"/><stop offset="0.33" stop-color="#bdffd4"/><stop offset="0.5" stop-color="#d7ffd3"/><stop offset="0.67" stop-color="#f3ffd2"/><stop offset="0.83" stop-color="#fff0c5"/><stop offset="1" stop-color="#ffd8b0"/></linearGradient>
<linearGradient id="cg3" x1="0" y1="0" x2="1" y2="0"><stop offset="0" stop-color="#8fffda"/><stop offset="0.17" stop-color="#a7ffd9"/><stop offset="0.33" stop-color="#c1ffd8"/><stop offset="0.5" stop-color="#dbffd7"/><stop offset="0.67" stop-color="#f7ffd6"/><stop offset="0.83" stop-color="#ffecc5"/><stop offset="1" stop-color="#ffd4b1"/></linearGradient>
<linearGradient id="cg4" x1="0" y1="0" x2="1" y2="0"><stop offset="0" stop-color="#92ffde"/><stop offset="0.17" stop-color="#abffdd"/><stop offset="0.33" stop-color="#c4ffdc"/><stop offset="0.5" stop-color="#dfffdb"/><stop offset="0.67" stop-color="#fbffdb"/><stop offset="0.83" stop-color="#ffe8c6"/><stop offset="1" stop-color="#ffd1b1"/></linearGradient>
<linearGradient id="cg5" x1="0" y1="0" x2="1" y2="0"><stop offset="0" stop-color="#95ffe2"/><stop offset="0.17" stop-color="#aeffe1"/><stop offset="0.33" stop-color="#c8ffe0"/><stop offset="0.5" stop-color="#e3ffe0"/><stop offset="0.67" stop-color="#ffffdf"/><stop offset="0.83" stop-color="#ffe4c7"/><stop offset="1" stop-color="#ffcdb2"/></linearGradient>
<linearGradient id="cg6" x1="0" y1="0" x2="1" y2="0"><stop offset="0" stop-color="#98ffe6"/><stop offset="0.17" stop-color="#b1ffe5"/><stop offset="0.33" stop-color="#cbffe5"/><stop offset="0.5" stop-color="#e7ffe4"/><stop offset="0.67" stop-color="#fffadf"/><stop offset="0.83" stop-color="#ffe0c7"/><stop offset="1" stop-color="#ffcab3"/></linearGradient>
<linearGradient id="cg7" x1="0" y1="0" x2="1" y2="0"><stop offset="0" stop-color="#9bffea"/><stop offset="0.17" stop-color="#b5ffe9"/><stop offset="0.33" stop-color="#cfffe9"/><stop offset="0.5" stop-color="#ebffe9"/><stop offset="0.67" stop-color="#fff6e0"/><stop offset="0.83" stop-color="#ffdcc8"/><stop offset="1" stop-color="#ffc6b4"/></linearGradient>
<linearGradient id="cg8" x1="0" y1="0" x2="1" y2="0"><stop offset="0" stop-color="#9effee"/><stop offset="0.17" stop-color="#b8ffee"/><stop offset="0.33" stop-color="#d3ffed"/><stop offset="0.5" stop-color="#efffed"/><stop offset="0.67" stop-color="#fff1e0"/><stop offset="0.83" stop-color="#ffd8c8"/><stop offset="1" stop-color="#ffc3b4"/></linearGradient>
<linearGradient id="cg9" x1="0" y1="0" x2="1" y2="0"><stop offset="0" stop-color="#a1fff3"/><stop offset="0.17" stop-color="#bcfff2"/><stop offset="0.33" stop-color="#d7fff2"/><stop offset="0.5" stop-color="#f4fff2"/><stop offset="0.67" stop-color="#ffede1"/><stop offset="0.83" stop-color="#ffd5c9"/><stop offset="1" stop-color="#ffc0b5"/></linearGradient>
<linearGradient id="cg10" x1="0" y1="0" x2="1" y2="0"><stop offset="0" stop-color="#a5fff7"/><stop offset="0.17" stop-color="#bffff7"/><stop offset="0.33" stop-color="#dbfff7"/><stop offset="0.5" stop-color="#f8fff7"/><stop offset="0.67" stop-color="#ffe9e1"/><stop offset="0.83" stop-color="#ffd1ca"/><stop offset="1" stop-color="#ffbcb6"/></linearGradient>
<linearGradient id="cg11" x1="0" y1="0" x2="1" y2="0"><stop offset="0" stop-color="#a8fffb"/><stop offset="0.17" stop-color="#c3fffb"/><stop offset="0.33" stop-color="#dffffb"/><stop offset="0.5" stop-color="#fdfffb"/><stop offset="0.67" stop-color="#ffe5e2"/><stop offset="0.83" stop-color="#ffcdca"/><stop offset="1" stop-color="#ffb9b6"/></linearGradient>
<linearGradient id="cg12" x1="0" y1="0" x2="1" y2="0"><stop offset="0" stop-color="#abfeff"/><stop offset="0.17" stop-color="#c6feff"/><stop offset="0.33" stop-color="#e2feff"/><stop offset="0.5" stop-color="#fffdfe"/><stop offset="0.67" stop-color="#ffe1e2"/><stop offset="0.83" stop-color="#ffcacb"/><stop offset="1" stop-color="#ffb6b7"/></linearGradient>
<linearGradient id="cg13" x1="0" y1="0" x2="1" y2="0"><stop offset="0" stop-color="#abf9ff"/><stop offset="0.17" stop-color="#c6f9ff"/><stop offset="0.33" stop-color="#e2f9ff"/><stop offset="0.5" stop-color="#fff8fe"/><stop offset="0.67" stop-color="#ffdde3"/><stop offset="0.83" stop-color="#ffc6cb"/><stop offset="1" stop-color="#ffb2b8"/></linearGradient>
<linearGradient id="cg14" x1="0" y1="0" x2="1" y2="0"><stop offset="0" stop-color="#abf5ff"/><stop offset="0.17" stop-color="#c6f4ff"/><stop offset="0.33" stop-color="#e2f4ff"/><stop offset="0.5" stop-color="#fff3ff"/><stop offset="0.67" stop-color="#ffd9e3"/><stop offset="0.83" stop-color="#ffc2cc"/><stop offset="1" stop-color="#ffafb8"/></linearGradient>
<linearGradient id="cg15" x1="0" y1="0" x2="1" y2="0"><stop offset="0" stop-color="#abf0ff"/><stop offset="0.17" stop-color="#c6f0ff"/><stop offset="0.33" stop-color="#e2efff"/><stop offset="0.5" stop-color="#ffefff"/><stop offset="0.67" stop-color="#ffd5e4"/><stop offset="0.83" stop-color="#ffbfcd"/><stop offset="1" stop-color="#ffacb9"/></linearGradient>
<linearGradient id="cg16" x1="0" y1="0" x2="1" y2="0"><stop offset="0" stop-color="#acecff"/><stop offset="0.17" stop-color="#c6ebff"/><stop offset="0.33" stop-color="#e2ebff"/><stop offset="0.5" stop-color="#ffeaff"/><stop offset="0.67" stop-color="#ffd1e4"/><stop offset="0.83" stop-color="#ffbbcd"/><stop offset="1" stop-color="#ffa9b9"/></linearGradient>
<linearGradient id="cg17" x1="0" y1="0" x2="1" y2="0"><stop offset="0" stop-color="#ace7ff"/><stop offset="0.17" stop-color="#c6e7ff"/><stop offset="0.33" stop-color="#e2e6ff"/><stop offset="0.5" stop-color="#fee6ff"/><stop offset="0.67" stop-color="#ffcde5"/><stop offset="0.83" stop-color="#ffb8ce"/><stop offset="1" stop-color="#ffa6ba"/></linearGradient>
<linearGradient id="cg18" x1="0" y1="0" x2="1" y2="0"><stop offset="0" stop-color="#ace3ff"/><stop offset="0.17" stop-color="#c6e2ff"/><stop offset="0.33" stop-color="#e1e2ff"/><stop offset="0.5" stop-color="#fee1ff"/><stop offset="0.67" stop-color="#ffc9e5"/><stop offset="0.83" stop-color="#ffb5ce"/><stop offset="1" stop-color="#ffa3bb"/></linearGradient>
<linearGradient id="cg19" x1="0" y1="0" x2="1" y2="0"><stop offset="0" stop-color="#addfff"/><stop offset="0.17" stop-color="#c6deff"/><stop offset="0.33" stop-color="#e1ddff"/><stop offset="0.5" stop-color="#fedcff"/><stop offset="0.67" stop-color="#ffc6e6"/><stop offset="0.83" stop-color="#ffb1cf"/><stop offset="1" stop-color="#ffa0bb"/></linearGradient>
<linearGradient id="cg20" x1="0" y1="0" x2="1" y2="0"><stop offset="0" stop-color="#addbff"/><stop offset="0.17" stop-color="#c6daff"/><stop offset="0.33" stop-color="#e1d9ff"/><stop offset="0.5" stop-color="#fdd8ff"/><stop offset="0.67" stop-color="#ffc2e6"/><stop offset="0.83" stop-color="#ffaecf"/><stop offset="1" stop-color="#ff9dbc"/></linearGradient>
<linearGradient id="cg21" x1="0" y1="0" x2="1" y2="0"><stop offset="0" stop-color="#add7ff"/><stop offset="0.17" stop-color="#c6d6ff"/><stop offset="0.33" stop-color="#e1d5ff"/><stop offset="0.5" stop-color="#fdd4ff"/><stop offset="0.67" stop-color="#ffbee6"/><stop offset="0.83" stop-color="#ffabd0"/><stop offset="1" stop-color="#ff9abc"/></linearGradient>
<linearGradient id="cg22" x1="0" y1="0" x2="1" y2="0"><stop offset="0" stop-color="#add3ff"/><stop offset="0.17" stop-color="#c7d2ff"/><stop offset="0.33" stop-color="#e1d0ff"/><stop offset="0.5" stop-color="#fdcfff"/><stop offset="0.67" stop-color="#ffbbe7"/><stop offset="0.83" stop-color="#ffa7d0"/><stop offset="1" stop-color="#ff97bd"/></linearGradient>
<linearGradient id="cg23" x1="0" y1="0" x2="1" y2="0"><stop offset="0" stop-color="#aecfff"/><stop offset="0.17" stop-color="#c7cdff"/><stop offset="0.33" stop-color="#e1ccff"/><stop offset="0.5" stop-color="#fccbff"/><stop offset="0.67" stop-color="#ffb7e7"/><stop offset="0.83" stop-color="#ffa4d1"/><stop offset="1" stop-color="#ff94be"/></linearGradient>
<clipPath id="cieclip"><rect x="804" y="1055" width="323" height="233.6"/></clipPath>
<filter id="cblur" x="-5%" y="-5%" width="110%" height="110%"><feGaussianBlur stdDeviation="0 5"/></filter>
</defs>
<g clip-path="url(#cieclip)"><g filter="url(#cblur)">
<rect x="794" y="1045.27" width="343" height="20.07" fill="url(#cg0)"/>
<rect x="794" y="1064.73" width="343" height="10.33" fill="url(#cg1)"/>
<rect x="794" y="1074.47" width="343" height="10.33" fill="url(#cg2)"/>
<rect x="794" y="1084.2" width="343" height="10.33" fill="url(#cg3)"/>
<rect x="794" y="1093.93" width="343" height="10.33" fill="url(#cg4)"/>
<rect x="794" y="1103.67" width="343" height="10.33" fill="url(#cg5)"/>
<rect x="794" y="1113.4" width="343" height="10.33" fill="url(#cg6)"/>
<rect x="794" y="1123.13" width="343" height="10.33" fill="url(#cg7)"/>
<rect x="794" y="1132.87" width="343" height="10.33" fill="url(#cg8)"/>
<rect x="794" y="1142.6" width="343" height="10.33" fill="url(#cg9)"/>
<rect x="794" y="1152.33" width="343" height="10.33" fill="url(#cg10)"/>
<rect x="794" y="1162.07" width="343" height="10.33" fill="url(#cg11)"/>
<rect x="794" y="1171.8" width="343" height="10.33" fill="url(#cg12)"/>
<rect x="794" y="1181.53" width="343" height="10.33" fill="url(#cg13)"/>
<rect x="794" y="1191.27" width="343" height="10.33" fill="url(#cg14)"/>
<rect x="794" y="1201" width="343" height="10.33" fill="url(#cg15)"/>
<rect x="794" y="1210.73" width="343" height="10.33" fill="url(#cg16)"/>
<rect x="794" y="1220.47" width="343" height="10.33" fill="url(#cg17)"/>
<rect x="794" y="1230.2" width="343" height="10.33" fill="url(#cg18)"/>
<rect x="794" y="1239.93" width="343" height="10.33" fill="url(#cg19)"/>
<rect x="794" y="1249.67" width="343" height="10.33" fill="url(#cg20)"/>
<rect x="794" y="1259.4" width="343" height="10.33" fill="url(#cg21)"/>
<rect x="794" y="1269.13" width="343" height="10.33" fill="url(#cg22)"/>
<rect x="794" y="1278.87" width="343" height="20.07" fill="url(#cg23)"/>
</g>
<path d="M831.1 1299.5L845.1 1288.3Q984.6 1176.75 1124.1 1094.2L1137 1086.6" fill="none" stroke="#0a0a0a" stroke-width="3.4"/>
</g>
<rect x="804" y="1055" width="323" height="233.6" fill="none" stroke="#8e8e8e" stroke-width="1.8"/>
<path d="M796.5 1261.8H804" stroke="#c8c8c8" stroke-width="1.6"/>
<text x="795.4" y="1267.8" font-size="19.2" text-anchor="end" fill="#e0e0e0">0.31</text>
<path d="M796.5 1215.3H804" stroke="#c8c8c8" stroke-width="1.6"/>
<text x="795.4" y="1221.3" font-size="19.2" text-anchor="end" fill="#e0e0e0">0.32</text>
<path d="M796.5 1168.8H804" stroke="#c8c8c8" stroke-width="1.6"/>
<text x="795.4" y="1174.8" font-size="19.2" text-anchor="end" fill="#e0e0e0">0.33</text>
<path d="M796.5 1122.3H804" stroke="#c8c8c8" stroke-width="1.6"/>
<text x="795.4" y="1128.3" font-size="19.2" text-anchor="end" fill="#e0e0e0">0.34</text>
<path d="M796.5 1075.8H804" stroke="#c8c8c8" stroke-width="1.6"/>
<text x="795.4" y="1081.8" font-size="19.2" text-anchor="end" fill="#e0e0e0">0.35</text>
<path d="M817 1288.6V1296.1" stroke="#c8c8c8" stroke-width="1.6"/>
<text x="817" y="1318.8" font-size="19.2" text-anchor="middle" fill="#e0e0e0">0.29</text>
<path d="M881.5 1288.6V1296.1" stroke="#c8c8c8" stroke-width="1.6"/>
<text x="881.5" y="1318.8" font-size="19.2" text-anchor="middle" fill="#e0e0e0">0.3</text>
<path d="M946 1288.6V1296.1" stroke="#c8c8c8" stroke-width="1.6"/>
<text x="946" y="1318.8" font-size="19.2" text-anchor="middle" fill="#e0e0e0">0.31</text>
<path d="M1010.5 1288.6V1296.1" stroke="#c8c8c8" stroke-width="1.6"/>
<text x="1010.5" y="1318.8" font-size="19.2" text-anchor="middle" fill="#e0e0e0">0.32</text>
<path d="M1075 1288.6V1296.1" stroke="#c8c8c8" stroke-width="1.6"/>
<text x="1075" y="1318.8" font-size="19.2" text-anchor="middle" fill="#e0e0e0">0.33</text>
<rect x="965.41" y="1176.45" width="8" height="8" fill="#e8e8e8" stroke="#111" stroke-width="1.4"/>
<circle cx="1096.29" cy="1153.46" r="6" fill="#000000" stroke="#141414" stroke-width="1.3"/>
<circle cx="927.94" cy="1166.01" r="6" fill="#1a1a1a" stroke="#141414" stroke-width="1.3"/>
<circle cx="960.19" cy="1162.76" r="6" fill="#333333" stroke="#141414" stroke-width="1.3"/>
<circle cx="949.87" cy="1185.08" r="6" fill="#4d4d4d" stroke="#141414" stroke-width="1.3"/>
<circle cx="949.87" cy="1162.76" r="6" fill="#666666" stroke="#141414" stroke-width="1.3"/>
<circle cx="959.55" cy="1181.36" r="6" fill="#808080" stroke="#141414" stroke-width="1.3"/>
<circle cx="964.06" cy="1179.03" r="6" fill="#999999" stroke="#141414" stroke-width="1.3"/>
<circle cx="964.06" cy="1164.62" r="6" fill="#b3b3b3" stroke="#141414" stroke-width="1.3"/>
<circle cx="958.9" cy="1172.52" r="6" fill="#cccccc" stroke="#141414" stroke-width="1.3"/>
<circle cx="971.16" cy="1169.73" r="6" fill="#e6e6e6" stroke="#141414" stroke-width="1.3"/>
<circle cx="962.77" cy="1168.8" r="6" fill="#ffffff" stroke="#141414" stroke-width="1.3"/>
</svg>
<div class="b" style="left:1139.5px;top:1042px;width:1411.5px;height:295.5px;background:#1c1c1c;border-top:2.4px solid #000;border-right:3px solid #0c0c0c;"></div>
<div class="b" style="left:1141.5px;top:1044px;width:1384.1px;height:272px;overflow:hidden;background:#444444;">
<div class="b" style="left:0px;top:0px;width:1384.1px;height:38px;background:linear-gradient(180deg,#333333 0%,#2c2c2c 44%,#1a1a1a 50%,#121212 100%);"></div>
<span class="t" style="left:256.5px;top:12.37px;font-size:18.7px;color:#ffffff;">0</span>
<span class="t" style="left:362.57px;top:12.37px;font-size:18.7px;color:#ffffff;">10</span>
<span class="t" style="left:473.84px;top:12.37px;font-size:18.7px;color:#ffffff;">20</span>
<span class="t" style="left:585.11px;top:12.37px;font-size:18.7px;color:#ffffff;">30</span>
<span class="t" style="left:696.38px;top:12.37px;font-size:18.7px;color:#ffffff;">40</span>
<span class="t" style="left:807.65px;top:12.37px;font-size:18.7px;color:#ffffff;">50</span>
<span class="t" style="left:918.92px;top:12.37px;font-size:18.7px;color:#ffffff;">60</span>
<span class="t" style="left:1030.19px;top:12.37px;font-size:18.7px;color:#ffffff;">70</span>
<span class="t" style="left:1141.46px;top:12.37px;font-size:18.7px;color:#ffffff;">80</span>
<span class="t" style="left:1252.73px;top:12.37px;font-size:18.7px;color:#ffffff;">90</span>
<span class="t" style="left:1358.8px;top:12.37px;font-size:18.7px;color:#ffffff;">100</span>
<div class="b" style="left:0px;top:38.4px;width:1384.1px;height:35.55px;background:#434343;"></div>
<span class="t" style="left:16.9px;top:46.77px;font-size:21.3px;color:#f4f4f4;font-weight:bold;transform:scaleX(0.9613);">x: CIE31</span>
<span class="t" style="left:212px;top:46.77px;font-size:21.3px;color:#f4f4f4;transform:scaleX(0.9695);">0.3333</span>
<span class="t" style="left:323.27px;top:46.77px;font-size:21.3px;color:#f4f4f4;transform:scaleX(0.9695);">0.3072</span>
<span class="t" style="left:434.54px;top:46.77px;font-size:21.3px;color:#f4f4f4;transform:scaleX(0.9695);">0.3122</span>
<span class="t" style="left:545.81px;top:46.77px;font-size:21.3px;color:#f4f4f4;transform:scaleX(0.9695);">0.3106</span>
<span class="t" style="left:657.08px;top:46.77px;font-size:21.3px;color:#f4f4f4;transform:scaleX(0.9695);">0.3106</span>
<span class="t" style="left:768.35px;top:46.77px;font-size:21.3px;color:#f4f4f4;transform:scaleX(0.9695);">0.3121</span>
<span class="t" style="left:879.62px;top:46.77px;font-size:21.3px;color:#f4f4f4;transform:scaleX(0.9695);">0.3128</span>
<span class="t" style="left:990.89px;top:46.77px;font-size:21.3px;color:#f4f4f4;transform:scaleX(0.9695);">0.3128</span>
<span class="t" style="left:1102.16px;top:46.77px;font-size:21.3px;color:#f4f4f4;transform:scaleX(0.9695);">0.3120</span>
<span class="t" style="left:1213.43px;top:46.77px;font-size:21.3px;color:#f4f4f4;transform:scaleX(0.9695);">0.3139</span>
<span class="t" style="left:1324.7px;top:46.77px;font-size:21.3px;color:#f4f4f4;transform:scaleX(0.9695);">0.3126</span>
<div class="b" style="left:0px;top:73.45px;width:1384.1px;height:35.55px;background:#808080;"></div>
<span class="t" style="left:16.9px;top:81.82px;font-size:21.3px;color:#f4f4f4;font-weight:bold;transform:scaleX(0.9613);">y: CIE31</span>
<span class="t" style="left:212px;top:81.82px;font-size:21.3px;color:#f4f4f4;transform:scaleX(0.9695);">0.3333</span>
<span class="t" style="left:323.27px;top:81.82px;font-size:21.3px;color:#f4f4f4;transform:scaleX(0.9695);">0.3306</span>
<span class="t" style="left:434.54px;top:81.82px;font-size:21.3px;color:#f4f4f4;transform:scaleX(0.9695);">0.3313</span>
<span class="t" style="left:545.81px;top:81.82px;font-size:21.3px;color:#f4f4f4;transform:scaleX(0.9695);">0.3265</span>
<span class="t" style="left:657.08px;top:81.82px;font-size:21.3px;color:#f4f4f4;transform:scaleX(0.9695);">0.3313</span>
<span class="t" style="left:768.35px;top:81.82px;font-size:21.3px;color:#f4f4f4;transform:scaleX(0.9695);">0.3273</span>
<span class="t" style="left:879.62px;top:81.82px;font-size:21.3px;color:#f4f4f4;transform:scaleX(0.9695);">0.3278</span>
<span class="t" style="left:990.89px;top:81.82px;font-size:21.3px;color:#f4f4f4;transform:scaleX(0.9695);">0.3309</span>
<span class="t" style="left:1102.16px;top:81.82px;font-size:21.3px;color:#f4f4f4;transform:scaleX(0.9695);">0.3292</span>
<span class="t" style="left:1213.43px;top:81.82px;font-size:21.3px;color:#f4f4f4;transform:scaleX(0.9695);">0.3298</span>
<span class="t" style="left:1324.7px;top:81.82px;font-size:21.3px;color:#f4f4f4;transform:scaleX(0.9695);">0.3300</span>
<div class="b" style="left:0px;top:108.5px;width:1384.1px;height:35.55px;background:#434343;"></div>
<span class="t" style="left:16.9px;top:116.87px;font-size:21.3px;color:#f4f4f4;font-weight:bold;transform:scaleX(0.8869);">Y</span>
<span class="t" style="left:212px;top:116.87px;font-size:21.3px;color:#f4f4f4;transform:scaleX(0.9695);">0.0000</span>
<span class="t" style="left:323.27px;top:116.87px;font-size:21.3px;color:#f4f4f4;transform:scaleX(0.9695);">1.1033</span>
<span class="t" style="left:434.54px;top:116.87px;font-size:21.3px;color:#f4f4f4;transform:scaleX(0.9695);">4.1600</span>
<span class="t" style="left:545.81px;top:116.87px;font-size:21.3px;color:#f4f4f4;transform:scaleX(0.9695);">8.9275</span>
<span class="t" style="left:657.08px;top:116.87px;font-size:21.3px;color:#f4f4f4;transform:scaleX(0.9695);">16.9533</span>
<span class="t" style="left:768.35px;top:116.87px;font-size:21.3px;color:#f4f4f4;transform:scaleX(0.9695);">27.5639</span>
<span class="t" style="left:879.62px;top:116.87px;font-size:21.3px;color:#f4f4f4;transform:scaleX(0.9695);">40.4473</span>
<span class="t" style="left:990.89px;top:116.87px;font-size:21.3px;color:#f4f4f4;transform:scaleX(0.9695);">57.1473</span>
<span class="t" style="left:1102.16px;top:116.87px;font-size:21.3px;color:#f4f4f4;transform:scaleX(0.9695);">77.7375</span>
<span class="t" style="left:1213.43px;top:116.87px;font-size:21.3px;color:#f4f4f4;transform:scaleX(0.9695);">101.6930</span>
<span class="t" style="left:1324.7px;top:116.87px;font-size:21.3px;color:#f4f4f4;transform:scaleX(0.9695);">128.1930</span>
<div class="b" style="left:0px;top:143.55px;width:1384.1px;height:35.55px;background:#808080;"></div>
<span class="t" style="left:16.9px;top:151.92px;font-size:21.3px;color:#f4f4f4;font-weight:bold;transform:scaleX(1.0222);">Target Y</span>
<span class="t" style="left:212px;top:151.92px;font-size:21.3px;color:#f4f4f4;transform:scaleX(0.9695);">0.0000</span>
<span class="t" style="left:323.27px;top:151.92px;font-size:21.3px;color:#f4f4f4;transform:scaleX(0.9695);">1.3242</span>
<span class="t" style="left:434.54px;top:151.92px;font-size:21.3px;color:#f4f4f4;transform:scaleX(0.9695);">4.2438</span>
<span class="t" style="left:545.81px;top:151.92px;font-size:21.3px;color:#f4f4f4;transform:scaleX(0.9695);">9.2647</span>
<span class="t" style="left:657.08px;top:151.92px;font-size:21.3px;color:#f4f4f4;transform:scaleX(0.9695);">17.0328</span>
<span class="t" style="left:768.35px;top:151.92px;font-size:21.3px;color:#f4f4f4;transform:scaleX(0.9695);">27.6718</span>
<span class="t" style="left:879.62px;top:151.92px;font-size:21.3px;color:#f4f4f4;transform:scaleX(0.9695);">40.8354</span>
<span class="t" style="left:990.89px;top:151.92px;font-size:21.3px;color:#f4f4f4;transform:scaleX(0.9695);">57.0716</span>
<span class="t" style="left:1102.16px;top:151.92px;font-size:21.3px;color:#f4f4f4;transform:scaleX(0.9695);">77.4064</span>
<span class="t" style="left:1213.43px;top:151.92px;font-size:21.3px;color:#f4f4f4;transform:scaleX(0.9695);">101.4388</span>
<span class="t" style="left:1324.7px;top:151.92px;font-size:21.3px;color:#f4f4f4;transform:scaleX(0.9695);">128.1930</span>
<div class="b" style="left:0px;top:178.6px;width:1384.1px;height:35.55px;background:#434343;"></div>
<span class="t" style="left:16.9px;top:186.97px;font-size:21.3px;color:#f4f4f4;font-weight:bold;transform:scaleX(1.0236);">Gamma Log/Log</span>
<span class="t" style="left:212px;top:186.97px;font-size:21.3px;color:#f4f4f4;transform:scaleX(0.9695);">1.2778</span>
<span class="t" style="left:323.27px;top:186.97px;font-size:21.3px;color:#f4f4f4;transform:scaleX(0.9695);">2.0828</span>
<span class="t" style="left:434.54px;top:186.97px;font-size:21.3px;color:#f4f4f4;transform:scaleX(0.9695);">2.1299</span>
<span class="t" style="left:545.81px;top:186.97px;font-size:21.3px;color:#f4f4f4;transform:scaleX(0.9695);">2.2010</span>
<span class="t" style="left:657.08px;top:186.97px;font-size:21.3px;color:#f4f4f4;transform:scaleX(0.9695);">2.2079</span>
<span class="t" style="left:768.35px;top:186.97px;font-size:21.3px;color:#f4f4f4;transform:scaleX(0.9695);">2.2301</span>
<span class="t" style="left:879.62px;top:186.97px;font-size:21.3px;color:#f4f4f4;transform:scaleX(0.9695);">2.2582</span>
<span class="t" style="left:990.89px;top:186.97px;font-size:21.3px;color:#f4f4f4;transform:scaleX(0.9695);">2.2474</span>
<span class="t" style="left:1102.16px;top:186.97px;font-size:21.3px;color:#f4f4f4;transform:scaleX(0.9695);">2.2416</span>
<span class="t" style="left:1213.43px;top:186.97px;font-size:21.3px;color:#f4f4f4;transform:scaleX(0.9695);">2.2443</span>
<span class="t" style="left:1324.7px;top:186.97px;font-size:21.3px;color:#f4f4f4;transform:scaleX(0.9695);">2.2749</span>
<div class="b" style="left:0px;top:213.65px;width:1384.1px;height:35.55px;background:#808080;"></div>
<span class="t" style="left:16.9px;top:222.02px;font-size:21.3px;color:#f4f4f4;font-weight:bold;transform:scaleX(0.9069);">CCT</span>
<span class="t" style="left:212px;top:222.02px;font-size:21.3px;color:#f4f4f4;transform:scaleX(0.9695);">5456.0000</span>
<span class="t" style="left:323.27px;top:222.02px;font-size:21.3px;color:#f4f4f4;transform:scaleX(0.9695);">6797.0000</span>
<span class="t" style="left:434.54px;top:222.02px;font-size:21.3px;color:#f4f4f4;transform:scaleX(0.9695);">6515.0000</span>
<span class="t" style="left:545.81px;top:222.02px;font-size:21.3px;color:#f4f4f4;transform:scaleX(0.9695);">6638.0000</span>
<span class="t" style="left:657.08px;top:222.02px;font-size:21.3px;color:#f4f4f4;transform:scaleX(0.9695);">6600.0000</span>
<span class="t" style="left:768.35px;top:222.02px;font-size:21.3px;color:#f4f4f4;transform:scaleX(0.9695);">6551.0000</span>
<span class="t" style="left:879.62px;top:222.02px;font-size:21.3px;color:#f4f4f4;transform:scaleX(0.9695);">6506.0000</span>
<span class="t" style="left:990.89px;top:222.02px;font-size:21.3px;color:#f4f4f4;transform:scaleX(0.9695);">6483.0000</span>
<span class="t" style="left:1102.16px;top:222.02px;font-size:21.3px;color:#f4f4f4;transform:scaleX(0.9695);">6543.0000</span>
<span class="t" style="left:1213.43px;top:222.02px;font-size:21.3px;color:#f4f4f4;transform:scaleX(0.9695);">6432.0000</span>
<span class="t" style="left:1324.7px;top:222.02px;font-size:21.3px;color:#f4f4f4;transform:scaleX(0.9695);">6502.0000</span>
<div class="b" style="left:0px;top:248.7px;width:1384.1px;height:35.55px;background:#434343;"></div>
<span class="t" style="left:16.9px;top:257.07px;font-size:21.3px;color:#f4f4f4;font-weight:bold;transform:scaleX(1.0143);">ΔE 2000</span>
<span class="t" style="left:212px;top:257.07px;font-size:21.3px;color:#f4f4f4;transform:scaleX(0.9695);">0.0000</span>
<span class="t" style="left:323.27px;top:257.07px;font-size:21.3px;color:#f4f4f4;transform:scaleX(0.9695);">1.4364</span>
<span class="t" style="left:434.54px;top:257.07px;font-size:21.3px;color:#f4f4f4;transform:scaleX(0.9695);">0.7327</span>
<span class="t" style="left:545.81px;top:257.07px;font-size:21.3px;color:#f4f4f4;transform:scaleX(0.9695);">0.7304</span>
<span class="t" style="left:657.08px;top:257.07px;font-size:21.3px;color:#f4f4f4;transform:scaleX(0.9695);">1.6741</span>
<span class="t" style="left:768.35px;top:257.07px;font-size:21.3px;color:#f4f4f4;transform:scaleX(0.9695);">0.6798</span>
<span class="t" style="left:879.62px;top:257.07px;font-size:21.3px;color:#f4f4f4;transform:scaleX(0.9695);">0.7779</span>
<span class="t" style="left:990.89px;top:257.07px;font-size:21.3px;color:#f4f4f4;transform:scaleX(0.9695);">1.1094</span>
<span class="t" style="left:1102.16px;top:257.07px;font-size:21.3px;color:#f4f4f4;transform:scaleX(0.9695);">0.6491</span>
<span class="t" style="left:1213.43px;top:257.07px;font-size:21.3px;color:#f4f4f4;transform:scaleX(0.9695);">0.5993</span>
<span class="t" style="left:1324.7px;top:257.07px;font-size:21.3px;color:#f4f4f4;transform:scaleX(0.9695);">0.9049</span>
</div>
<div class="b" style="left:2525.6px;top:1044px;width:22.4px;height:293px;background:#3a3a3a;"></div>
<div class="b" style="left:2525.6px;top:1082px;width:22.4px;height:234px;background:#585858;"></div>
<div class="b" style="left:2528.5px;top:1106px;width:17.5px;height:157px;background:#3a3a3a;border-radius:9px;"></div>
<div class="b" style="left:2528px;top:1084px;width:18.5px;height:19px;background:linear-gradient(180deg,#7a7a7a,#5e5e5e);border-radius:4px;"></div>
<div class="b" style="left:2528px;top:1295px;width:18.5px;height:19px;background:linear-gradient(180deg,#7a7a7a,#5e5e5e);border-radius:4px;"></div>
<div class="b" style="left:1141.5px;top:1316px;width:1384.1px;height:21px;background:#505050;"></div>
<div class="b" style="left:1166px;top:1318px;width:1293.6px;height:17.5px;background:#3b3b3b;border-radius:9px;"></div>
<div class="b" style="left:1144px;top:1317.5px;width:18.5px;height:18.5px;background:linear-gradient(180deg,#7a7a7a,#5e5e5e);border-radius:4px;"></div>
<div class="b" style="left:2506px;top:1317.5px;width:18.5px;height:18.5px;background:linear-gradient(180deg,#7a7a7a,#5e5e5e);border-radius:4px;"></div>
<svg width="2560" height="1528" viewBox="0 0 2560 1528" fill="#3a3a3a">
<path d="M2537.2 1089.6l6.600 6.800h-13.200z" fill="#3c3c3c"/><path d="M2537.2 1309.200l6.600-6.800h-13.200z" fill="#3c3c3c"/>
<path d="M1149.2 1326.8l7-6.4v12.8z"/><path d="M2519.2 1326.8l-7-6.4v12.8z"/>
</svg>
<div class="b" style="left:301.6px;top:1435.7px;width:157.8px;height:95px;background:linear-gradient(180deg,#a0a0a0 0%,#8a8a8a 30%,#6c6c6c 64%,#5a5a5a 100%);border-radius:7px 7px 0 0;box-shadow:inset 0 1px 0 rgba(255,255,255,.25), inset 1px 0 0 rgba(255,255,255,.12), inset -1px 0 0 rgba(0,0,0,.18);"></div>
<div class="b" style="left:309.1px;top:1443px;width:142.8px;height:54px;background:#000000;border-radius:5px;box-shadow:inset 0 1px 2px rgba(0,0,0,.35), 0 1px 0 rgba(255,255,255,.12);"></div>
<span class="t" style="left:377.05px;top:1506.98px;font-size:14.2px;color:#2e2e2e;font-weight:bold;">0</span>
<div class="b" style="left:462.75px;top:1435.7px;width:157.8px;height:95px;background:linear-gradient(180deg,#a0a0a0 0%,#8a8a8a 30%,#6c6c6c 64%,#5a5a5a 100%);border-radius:7px 7px 0 0;box-shadow:inset 0 1px 0 rgba(255,255,255,.25), inset 1px 0 0 rgba(255,255,255,.12), inset -1px 0 0 rgba(0,0,0,.18);"></div>
<div class="b" style="left:470.25px;top:1443px;width:142.8px;height:54px;background:#1a1a1a;border-radius:5px;box-shadow:inset 0 1px 2px rgba(0,0,0,.35), 0 1px 0 rgba(255,255,255,.12);"></div>
<span class="t" style="left:534.25px;top:1506.98px;font-size:14.2px;color:#2e2e2e;font-weight:bold;">10</span>
<div class="b" style="left:623.9px;top:1435.7px;width:157.8px;height:95px;background:linear-gradient(180deg,#a0a0a0 0%,#8a8a8a 30%,#6c6c6c 64%,#5a5a5a 100%);border-radius:7px 7px 0 0;box-shadow:inset 0 1px 0 rgba(255,255,255,.25), inset 1px 0 0 rgba(255,255,255,.12), inset -1px 0 0 rgba(0,0,0,.18);"></div>
<div class="b" style="left:631.4px;top:1443px;width:142.8px;height:54px;background:#333333;border-radius:5px;box-shadow:inset 0 1px 2px rgba(0,0,0,.35), 0 1px 0 rgba(255,255,255,.12);"></div>
<span class="t" style="left:695.4px;top:1506.98px;font-size:14.2px;color:#2e2e2e;font-weight:bold;">20</span>
<div class="b" style="left:785.05px;top:1435.7px;width:157.8px;height:95px;background:linear-gradient(180deg,#a0a0a0 0%,#8a8a8a 30%,#6c6c6c 64%,#5a5a5a 100%);border-radius:7px 7px 0 0;box-shadow:inset 0 1px 0 rgba(255,255,255,.25), inset 1px 0 0 rgba(255,255,255,.12), inset -1px 0 0 rgba(0,0,0,.18);"></div>
<div class="b" style="left:792.55px;top:1443px;width:142.8px;height:54px;background:#4d4d4d;border-radius:5px;box-shadow:inset 0 1px 2px rgba(0,0,0,.35), 0 1px 0 rgba(255,255,255,.12);"></div>
<span class="t" style="left:856.55px;top:1506.98px;font-size:14.2px;color:#2e2e2e;font-weight:bold;">30</span>
<div class="b" style="left:946.2px;top:1435.7px;width:157.8px;height:95px;background:linear-gradient(180deg,#a0a0a0 0%,#8a8a8a 30%,#6c6c6c 64%,#5a5a5a 100%);border-radius:7px 7px 0 0;box-shadow:inset 0 1px 0 rgba(255,255,255,.25), inset 1px 0 0 rgba(255,255,255,.12), inset -1px 0 0 rgba(0,0,0,.18);"></div>
<div class="b" style="left:953.7px;top:1443px;width:142.8px;height:54px;background:#666666;border-radius:5px;box-shadow:inset 0 1px 2px rgba(0,0,0,.35), 0 1px 0 rgba(255,255,255,.12);"></div>
<span class="t" style="left:1017.7px;top:1506.98px;font-size:14.2px;color:#2e2e2e;font-weight:bold;">40</span>
<div class="b" style="left:1107.35px;top:1435.7px;width:157.8px;height:95px;background:linear-gradient(180deg,#a0a0a0 0%,#8a8a8a 30%,#6c6c6c 64%,#5a5a5a 100%);border-radius:7px 7px 0 0;box-shadow:inset 0 1px 0 rgba(255,255,255,.25), inset 1px 0 0 rgba(255,255,255,.12), inset -1px 0 0 rgba(0,0,0,.18);"></div>
<div class="b" style="left:1114.85px;top:1443px;width:142.8px;height:54px;background:#808080;border-radius:5px;box-shadow:inset 0 1px 2px rgba(0,0,0,.35), 0 1px 0 rgba(255,255,255,.12);"></div>
<span class="t" style="left:1178.85px;top:1506.98px;font-size:14.2px;color:#2e2e2e;font-weight:bold;">50</span>
<div class="b" style="left:1268.5px;top:1435.7px;width:157.8px;height:95px;background:linear-gradient(180deg,#a0a0a0 0%,#8a8a8a 30%,#6c6c6c 64%,#5a5a5a 100%);border-radius:7px 7px 0 0;box-shadow:inset 0 1px 0 rgba(255,255,255,.25), inset 1px 0 0 rgba(255,255,255,.12), inset -1px 0 0 rgba(0,0,0,.18);"></div>
<div class="b" style="left:1276px;top:1443px;width:142.8px;height:54px;background:#999999;border-radius:5px;box-shadow:inset 0 1px 2px rgba(0,0,0,.35), 0 1px 0 rgba(255,255,255,.12);"></div>
<span class="t" style="left:1340px;top:1506.98px;font-size:14.2px;color:#2e2e2e;font-weight:bold;">60</span>
<div class="b" style="left:1429.65px;top:1435.7px;width:157.8px;height:95px;background:linear-gradient(180deg,#a0a0a0 0%,#8a8a8a 30%,#6c6c6c 64%,#5a5a5a 100%);border-radius:7px 7px 0 0;box-shadow:inset 0 1px 0 rgba(255,255,255,.25), inset 1px 0 0 rgba(255,255,255,.12), inset -1px 0 0 rgba(0,0,0,.18);"></div>
<div class="b" style="left:1437.15px;top:1443px;width:142.8px;height:54px;background:#b3b3b3;border-radius:5px;box-shadow:inset 0 1px 2px rgba(0,0,0,.35), 0 1px 0 rgba(255,255,255,.12);"></div>
<span class="t" style="left:1501.15px;top:1506.98px;font-size:14.2px;color:#2e2e2e;font-weight:bold;">70</span>
<div class="b" style="left:1590.8px;top:1435.7px;width:157.8px;height:95px;background:linear-gradient(180deg,#a0a0a0 0%,#8a8a8a 30%,#6c6c6c 64%,#5a5a5a 100%);border-radius:7px 7px 0 0;box-shadow:inset 0 1px 0 rgba(255,255,255,.25), inset 1px 0 0 rgba(255,255,255,.12), inset -1px 0 0 rgba(0,0,0,.18);"></div>
<div class="b" style="left:1598.3px;top:1443px;width:142.8px;height:54px;background:#cccccc;border-radius:5px;box-shadow:inset 0 1px 2px rgba(0,0,0,.35), 0 1px 0 rgba(255,255,255,.12);"></div>
<span class="t" style="left:1662.3px;top:1506.98px;font-size:14.2px;color:#2e2e2e;font-weight:bold;">80</span>
<div class="b" style="left:1751.95px;top:1435.7px;width:157.8px;height:95px;background:linear-gradient(180deg,#a0a0a0 0%,#8a8a8a 30%,#6c6c6c 64%,#5a5a5a 100%);border-radius:7px 7px 0 0;box-shadow:inset 0 1px 0 rgba(255,255,255,.25), inset 1px 0 0 rgba(255,255,255,.12), inset -1px 0 0 rgba(0,0,0,.18);"></div>
<div class="b" style="left:1759.45px;top:1443px;width:142.8px;height:54px;background:#e6e6e6;border-radius:5px;box-shadow:inset 0 1px 2px rgba(0,0,0,.35), 0 1px 0 rgba(255,255,255,.12);"></div>
<span class="t" style="left:1823.45px;top:1506.98px;font-size:14.2px;color:#2e2e2e;font-weight:bold;">90</span>
<div class="b" style="left:1913.1px;top:1435.7px;width:157.8px;height:95px;background:linear-gradient(180deg,#1f1f1f 0%,#2b2b2b 60%,#383838 100%);border-radius:6px 6px 0 0;"></div>
<div class="b" style="left:1920.6px;top:1443px;width:142.8px;height:54px;background:#ffffff;border-radius:5px;box-shadow:inset 0 1px 2px rgba(0,0,0,.35), 0 1px 0 rgba(255,255,255,.12);"></div>
<span class="t" style="left:1980.65px;top:1506.98px;font-size:14.2px;color:#ffffff;font-weight:bold;">100</span>
<div class="b" style="left:2076px;top:1435.7px;width:72px;height:27.2px;background:linear-gradient(180deg,#a6a6a6 0%,#8e8e8e 35%,#6e6e6e 80%,#646464 100%);box-shadow:inset 0 1px 0 rgba(255,255,255,.3), inset 1px 0 0 rgba(255,255,255,.14), inset -1px 0 0 rgba(0,0,0,.25), inset 0 -1px 0 rgba(0,0,0,.25);border-radius:6px 0 0 0;"></div>
<div class="b" style="left:2076px;top:1464.6px;width:72px;height:66px;background:linear-gradient(180deg,#a6a6a6 0%,#8e8e8e 35%,#6e6e6e 80%,#646464 100%);box-shadow:inset 0 1px 0 rgba(255,255,255,.3), inset 1px 0 0 rgba(255,255,255,.14), inset -1px 0 0 rgba(0,0,0,.25), inset 0 -1px 0 rgba(0,0,0,.25);"></div>
<div class="b" style="left:2149.5px;top:1435.2px;width:68.1px;height:45.2px;background:linear-gradient(180deg,#a6a6a6 0%,#8e8e8e 35%,#6e6e6e 80%,#646464 100%);box-shadow:inset 0 1px 0 rgba(255,255,255,.3), inset 1px 0 0 rgba(255,255,255,.14), inset -1px 0 0 rgba(0,0,0,.25), inset 0 -1px 0 rgba(0,0,0,.25);"></div>
<div class="b" style="left:2218.8px;top:1435.2px;width:66.6px;height:45.2px;background:linear-gradient(180deg,#a6a6a6 0%,#8e8e8e 35%,#6e6e6e 80%,#646464 100%);box-shadow:inset 0 1px 0 rgba(255,255,255,.3), inset 1px 0 0 rgba(255,255,255,.14), inset -1px 0 0 rgba(0,0,0,.25), inset 0 -1px 0 rgba(0,0,0,.25);"></div>
<div class="b" style="left:2286.6px;top:1435.2px;width:66.4px;height:45.2px;background:linear-gradient(180deg,#a6a6a6 0%,#8e8e8e 35%,#6e6e6e 80%,#646464 100%);box-shadow:inset 0 1px 0 rgba(255,255,255,.3), inset 1px 0 0 rgba(255,255,255,.14), inset -1px 0 0 rgba(0,0,0,.25), inset 0 -1px 0 rgba(0,0,0,.25);"></div>
<div class="b" style="left:2354.2px;top:1435.2px;width:66.5px;height:45.2px;background:linear-gradient(180deg,#a6a6a6 0%,#8e8e8e 35%,#6e6e6e 80%,#646464 100%);box-shadow:inset 0 1px 0 rgba(255,255,255,.3), inset 1px 0 0 rgba(255,255,255,.14), inset -1px 0 0 rgba(0,0,0,.25), inset 0 -1px 0 rgba(0,0,0,.25);"></div>
<div class="b" style="left:2421.9px;top:1435.2px;width:66.1px;height:45.2px;background:linear-gradient(180deg,#a6a6a6 0%,#8e8e8e 35%,#6e6e6e 80%,#646464 100%);box-shadow:inset 0 1px 0 rgba(255,255,255,.3), inset 1px 0 0 rgba(255,255,255,.14), inset -1px 0 0 rgba(0,0,0,.25), inset 0 -1px 0 rgba(0,0,0,.25);"></div>
<div class="b" style="left:2489.2px;top:1435.2px;width:66.8px;height:45.2px;background:linear-gradient(180deg,#a6a6a6 0%,#8e8e8e 35%,#6e6e6e 80%,#646464 100%);box-shadow:inset 0 1px 0 rgba(255,255,255,.3), inset 1px 0 0 rgba(255,255,255,.14), inset -1px 0 0 rgba(0,0,0,.25), inset 0 -1px 0 rgba(0,0,0,.25);border-radius:0 6px 0 0;"></div>
<div class="b" style="left:2149.5px;top:1482.4px;width:204px;height:48px;background:linear-gradient(180deg,#a6a6a6 0%,#8e8e8e 35%,#6e6e6e 80%,#646464 100%);box-shadow:inset 0 1px 0 rgba(255,255,255,.3), inset 1px 0 0 rgba(255,255,255,.14), inset -1px 0 0 rgba(0,0,0,.25), inset 0 -1px 0 rgba(0,0,0,.25);"></div>
<div class="b" style="left:2354.8px;top:1482.4px;width:202.4px;height:48px;background:linear-gradient(180deg,#a6a6a6 0%,#8e8e8e 35%,#6e6e6e 80%,#646464 100%);box-shadow:inset 0 1px 0 rgba(255,255,255,.3), inset 1px 0 0 rgba(255,255,255,.14), inset -1px 0 0 rgba(0,0,0,.25), inset 0 -1px 0 rgba(0,0,0,.25);"></div>
<svg width="2560" height="1528" viewBox="0 0 2560 1528">
<defs><linearGradient id="icb" x1="0" y1="0" x2="0" y2="1"><stop offset="0" stop-color="#747474"/><stop offset="1" stop-color="#a8a8a8"/></linearGradient>
<linearGradient id="sqb" x1="0" y1="0" x2="0" y2="1"><stop offset="0" stop-color="#a8a8a8"/><stop offset="0.5" stop-color="#a0a0a0"/><stop offset="0.52" stop-color="#8a8a8a"/><stop offset="1" stop-color="#8e8e8e"/></linearGradient></defs>
<circle cx="2112" cy="1449" r="11.5" fill="url(#icb)"/><path d="M2112 1444.4l6.6 6.4h-13.2z" fill="#2e2e2e"/>
<rect x="2090.5" y="1473.5" width="43" height="43" rx="6" fill="url(#sqb)" stroke="#262626" stroke-width="3"/>
<rect x="2102" y="1485.5" width="20.4" height="20" fill="#0c0c0c"/>
<g fill="url(#icb)"><circle cx="2184" cy="1458.2" r="15"/><circle cx="2252.5" cy="1458.2" r="15"/><circle cx="2320.3" cy="1458.2" r="15"/><circle cx="2388" cy="1458.2" r="15"/><circle cx="2455.6" cy="1458.2" r="15"/><circle cx="2523.5" cy="1458.2" r="15"/><circle cx="2196" cy="1505" r="14.5"/><circle cx="2516.5" cy="1505" r="14.5"/></g>
<rect x="2178.2" y="1452.6" width="11.8" height="11.4" fill="#2c2c2c"/>
<path d="M2248.4 1450.4l13.2 7.8-13.2 7.8z" fill="#2c2c2c"/>
<g fill="none" stroke="#2c2c2c" stroke-width="2.4"><path d="M2315.6 1450.800h-3.400v15h3.400M2325 1450.800h3.400v15h-3.400" stroke-width="2.8"/><path d="M2317.400 1458.300h2M2321.200 1458.300h2" stroke-width="2.6"/>
<path transform="translate(2388 1458.400) scale(0.86 0.84) translate(-2388 -1458.200)" stroke-width="3" d="M2388 1458.200c-2.400-3.600-4.400-4.600-6.200-4.600a4.500 4.500 0 0 0 0 9c1.800 0 3.800-1 6.200-4.400c2.400 3.400 4.400 4.400 6.200 4.400a4.500 4.500 0 0 0 0-9c-1.800 0-3.800 1-6.200 4.600z"/>
<path d="M2448.800 1456.600a7 7 0 0 1 12.400-3.200M2462.400 1459.800a7 7 0 0 1-12.400 3.200" stroke-width="3.400"/>
<path d="M2195.300 1497.200l-6.400 7.300 6.400 7.300M2201.900 1497.200l-6.400 7.300 6.400 7.300" stroke-width="2.300"/>
<path d="M2511.200 1497.200l6.400 7.300-6.400 7.300M2517.800 1497.200l6.400 7.300-6.400 7.300" stroke-width="2.300"/></g>
<path d="M2464 1448l-0.400 7.800-7.200-2.600z M2447.200 1468.400l0.400-7.800 7.200 2.600z" fill="#2c2c2c"/>
</svg>
<span class="t" style="left:2234.6px;top:1489.17px;font-size:32.4px;color:#2b2b2b;transform:scaleX(1.0690);">Back</span>
<span class="t" style="left:2394.6px;top:1489.17px;font-size:32.4px;color:#2b2b2b;transform:scaleX(1.1783);">Next</span>
</div></body></html>
